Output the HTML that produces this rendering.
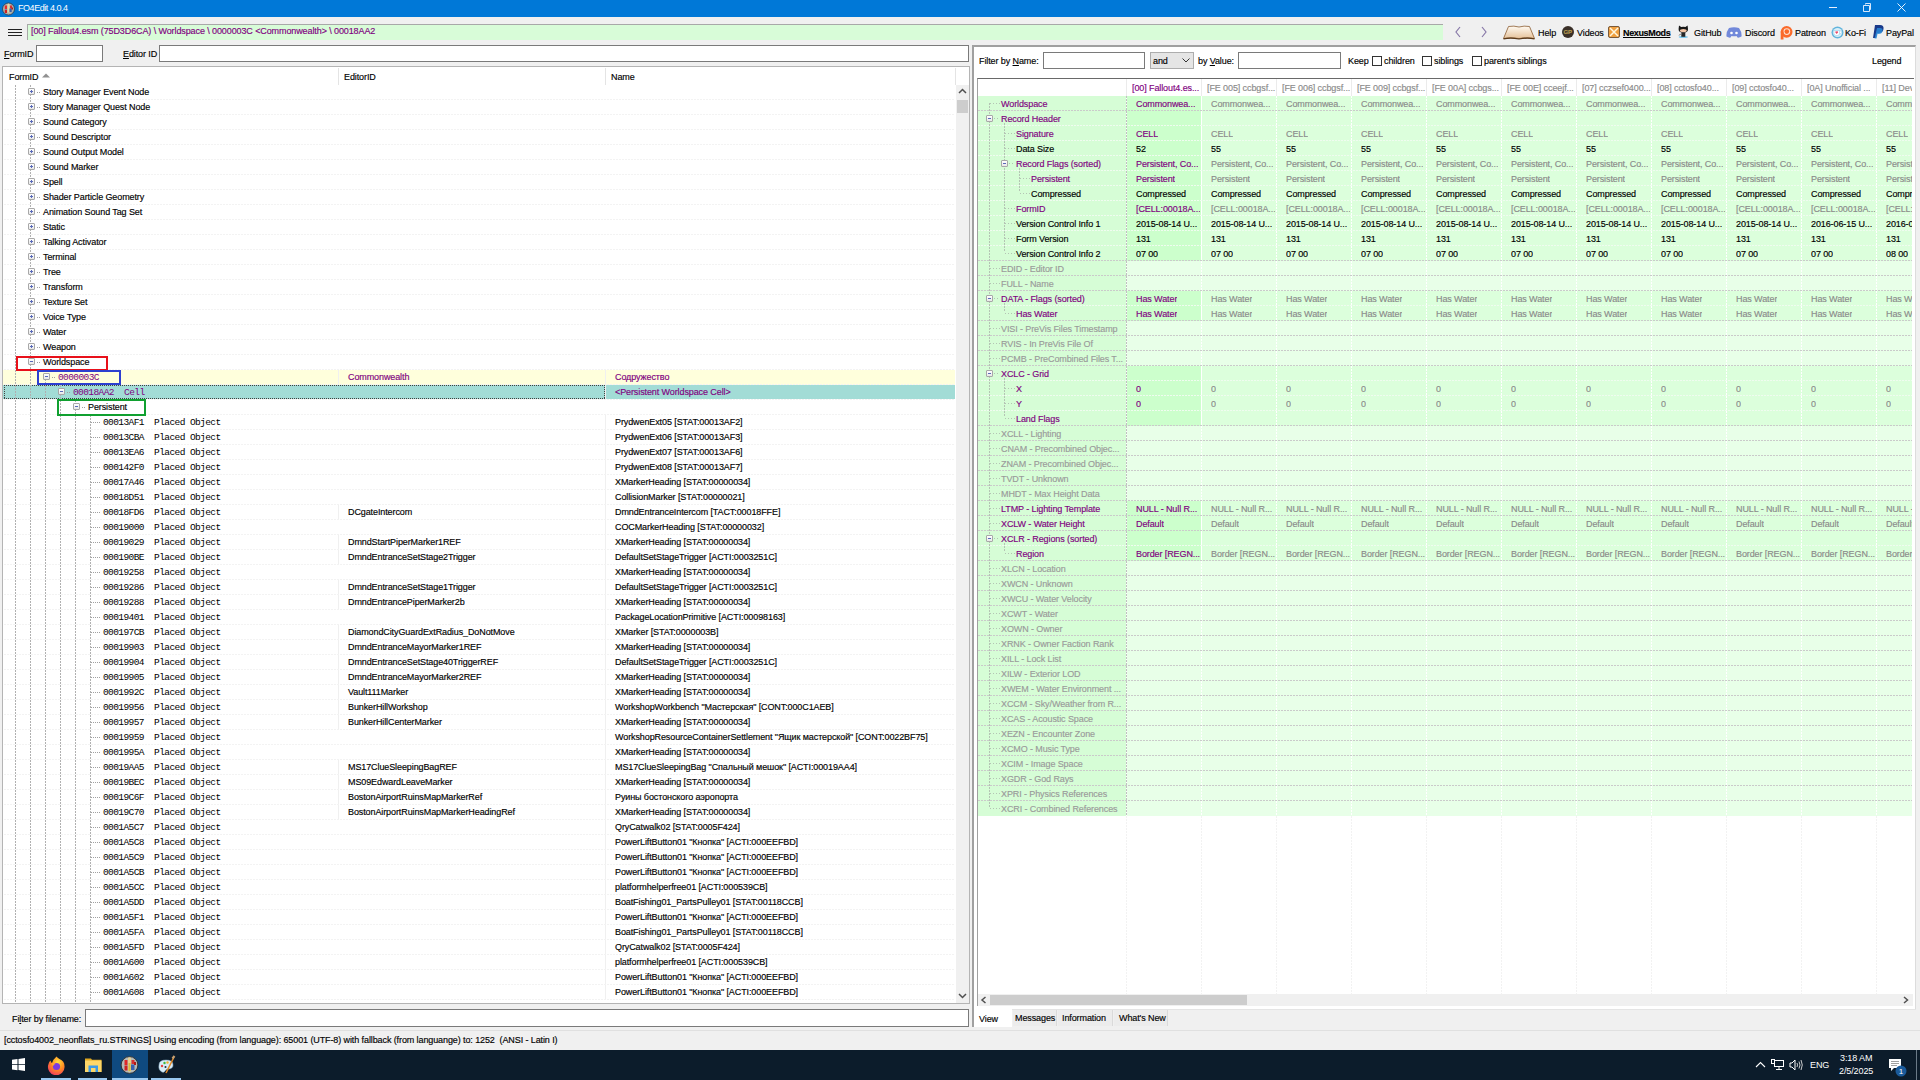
<!DOCTYPE html><html><head><meta charset="utf-8"><style>
*{box-sizing:border-box;margin:0;padding:0}
html,body{width:1920px;height:1080px;overflow:hidden;background:#f0f0f0}
body{position:relative;font-family:"Liberation Sans",sans-serif;font-size:9px;color:#000;letter-spacing:-0.1px}
.a{position:absolute}
.t{position:absolute;white-space:pre;line-height:15px;height:15px;-webkit-text-stroke:0.15px currentColor}
.m{font-family:"Liberation Mono",monospace;font-size:9.5px;letter-spacing:-0.59px;-webkit-text-stroke:0}
.inp{position:absolute;background:#fff;border:1px solid #7a7a7a}
.hd{position:absolute;height:1px;background:repeating-linear-gradient(to right,var(--c) 0 2px,transparent 2px 3px)}
.vd{position:absolute;width:1px;background:repeating-linear-gradient(to bottom,var(--c) 0 2px,transparent 2px 3px)}
.box{position:absolute;width:7px;height:7px;border:1px solid #a8a8a8;border-radius:1px;background:linear-gradient(#fff,#e8e8e8)}
.box::after{content:"";position:absolute;left:1px;top:2px;width:3px;height:1px;background:#5a6ab8}
.plus::before{content:"";position:absolute;left:2px;top:1px;width:1px;height:3px;background:#5a6ab8}
</style></head><body>
<div class="a" style="left:0;top:0;width:1920px;height:17px;background:#0078d7"></div>
<svg class="a" style="left:1px;top:1px" width="14" height="15"><defs><clipPath id="ci"><circle cx="7.5" cy="8" r="5.6"/></clipPath></defs><circle cx="7.5" cy="8" r="6" fill="#a9b0ad" stroke="#2a3a4a" stroke-width="0.8"/><g clip-path="url(#ci)"><rect x="3.8" y="4.5" width="2.2" height="3.5" fill="#e82828"/><rect x="3.8" y="8.5" width="2.2" height="3.5" fill="#d02020"/><rect x="4" y="8" width="2" height="0.6" fill="#6a8ac8"/><rect x="6.5" y="2.5" width="2" height="9" fill="#e8d8a0"/><rect x="9" y="4.5" width="2" height="3" fill="#d83030"/><rect x="8.5" y="7.5" width="2.2" height="3.5" fill="#3a60a8"/><rect x="10.5" y="6.5" width="1.5" height="2" fill="#b01818"/></g></svg>
<div class="t" style="left:18px;top:1px;color:#fff;font-size:9px;line-height:15px;letter-spacing:-0.45px;-webkit-text-stroke:0">FO4Edit 4.0.4</div>
<div class="a" style="left:1829px;top:7px;width:8px;height:1px;background:#e8f0ff"></div>
<svg class="a" style="left:1862px;top:2px" width="10" height="10"><path d="M1.5 3.5H7.5V9.5H1.5Z" stroke="#eef4ff" fill="none" stroke-width="0.9"/><path d="M3.5 2.5V1.5H8.5V7.5H7.5" stroke="#eef4ff" fill="none" stroke-width="0.9"/></svg>
<svg class="a" style="left:1897px;top:3px" width="9" height="9"><path d="M0.5 0.5L8.5 8.5M8.5 0.5L0.5 8.5" stroke="#fff" stroke-width="0.9"/></svg>
<div class="a" style="left:8px;top:29px;width:14px;height:1px;background:#222"></div>
<div class="a" style="left:8px;top:32px;width:14px;height:1px;background:#222"></div>
<div class="a" style="left:8px;top:35px;width:14px;height:1px;background:#222"></div>
<div class="a" style="left:27px;top:24px;width:1416px;height:16px;background:#d8fcd8;border-top:1px solid #a8a8a8;border-left:1px solid #a8a8a8"></div>
<div class="t" style="left:31px;top:24px;color:#800080">[00] Fallout4.esm (75D3D6CA) \ Worldspace \ 0000003C &lt;Commonwealth&gt; \ 00018AA2</div>
<svg class="a" style="left:1454px;top:26px" width="8" height="12"><path d="M6 1L2 6L6 11" stroke="#8878a8" stroke-width="1.2" fill="none"/></svg>
<svg class="a" style="left:1480px;top:26px" width="8" height="12"><path d="M2 1L6 6L2 11" stroke="#8878a8" stroke-width="1.2" fill="none"/></svg>
<svg class="a" style="left:1502px;top:25px" width="34" height="15"><defs><linearGradient id="bk" x1="0" y1="0" x2="0" y2="1"><stop offset="0" stop-color="#fffaf2"/><stop offset="1" stop-color="#e6c29a"/></linearGradient></defs><path d="M1.5 13.5 L6.5 1.5 Q12 0.5 17 2 Q22 0.5 27.5 1.5 L32.5 13.5 Q25 12 17 13.5 Q9 12 1.5 13.5Z" fill="url(#bk)" stroke="#8a5a30" stroke-width="0.8"/><path d="M1.5 13.8 Q9 12.5 17 14 Q25 12.5 32.5 13.8" stroke="#5a3818" stroke-width="1.2" fill="none"/></svg>
<div class="t" style="left:1538px;top:26px;">Help</div>
<div class="a" style="left:1562px;top:26px;width:12px;height:12px;border-radius:50%;background:#3a3028;"></div>
<div class="t" style="left:1563.5px;top:25px;color:#b89a50;font-size:6px;font-weight:bold">GP</div>
<div class="t" style="left:1577px;top:26px;">Videos</div>
<div class="a" style="left:1608px;top:26px;width:12px;height:12px;background:#f0a040;border:1px solid #7a5a3a;border-radius:2px"></div>
<svg class="a" style="left:1608px;top:26px" width="12" height="12"><path d="M2 2L10 10M10 2L2 10" stroke="#fff8e0" stroke-width="1.5"/></svg>
<div class="t" style="left:1623px;top:26px;font-weight:bold;text-decoration:underline;letter-spacing:-0.35px">NexusMods</div>
<svg class="a" style="left:1677px;top:24px" width="13" height="15"><ellipse cx="6.3" cy="13" rx="4.6" ry="1.1" fill="#7cc8ee"/><path d="M2 1.5 L4.2 3 Q6.3 2.3 8.4 3 L10.6 1.5 L11 5 Q11.2 8.8 6.3 8.8 Q1.4 8.8 1.6 5Z" fill="#181818"/><ellipse cx="6.3" cy="6.6" rx="3.4" ry="1.7" fill="#f2c4a4"/><rect x="4.3" y="8.5" width="4" height="4.3" fill="#262626"/><path d="M4.5 10 Q2.5 10 2 11.5" stroke="#9a9a9a" stroke-width="1"/></svg>
<div class="t" style="left:1694px;top:26px;">GitHub</div>
<svg class="a" style="left:1726px;top:27px" width="16" height="11"><path d="M3 1 Q8 -0.5 13 1 Q16 5 15.5 9.5 Q13 11 11.5 10.5 L10.5 9 Q8 9.7 5.5 9 L4.5 10.5 Q3 11 0.5 9.5 Q0 5 3 1Z" fill="#7289da"/><circle cx="5.5" cy="6" r="1.3" fill="#fff"/><circle cx="10.5" cy="6" r="1.3" fill="#fff"/></svg>
<div class="t" style="left:1745px;top:26px;">Discord</div>
<svg class="a" style="left:1779px;top:25px" width="14" height="15"><circle cx="7.6" cy="6.8" r="5.9" fill="#fa6a2a"/><circle cx="7.8" cy="6.6" r="3.4" fill="#fde0d0"/><circle cx="7.8" cy="6.6" r="2.3" fill="#fa6a2a"/><rect x="1.7" y="6.5" width="2.8" height="8" fill="#fa6a2a"/></svg>
<div class="t" style="left:1795px;top:26px;">Patreon</div>
<svg class="a" style="left:1831px;top:26px" width="13" height="13"><circle cx="6.5" cy="6.5" r="6" fill="#62b4dc"/><circle cx="6.5" cy="6.5" r="4.6" fill="#d8eef8"/><path d="M3 4.5 h5.5 v3 a2 2 0 0 1 -2 2 h-1.5 a2 2 0 0 1 -2 -2z M8.5 5 h1 a1.2 1.2 0 0 1 0 2.4 h-1" fill="#fff" stroke="#8ac8e8" stroke-width="0.5"/><path d="M5.7 8 L4.4 6.6 A0.8 0.8 0 0 1 5.7 5.6 A0.8 0.8 0 0 1 7 6.6Z" fill="#e84a6a"/></svg>
<div class="t" style="left:1845px;top:26px;">Ko-Fi</div>
<svg class="a" style="left:1873px;top:25px" width="11" height="14"><path d="M2 0 h5 q4 0 3.5 4 q-0.5 4 -5 4 h-1.5 l-1 5 h-3z" fill="#1a3a8a"/><path d="M4 3 h3 q3 0 2.5 3 q-0.5 3 -4 3 h-1 l-1 4.5 h-2z" fill="#2a8ad8" opacity="0.85"/></svg>
<div class="t" style="left:1886px;top:26px;">PayPal</div>
<div class="t" style="left:4px;top:47px;"><u>F</u>ormID</div>
<div class="inp" style="left:36px;top:45px;width:67px;height:17px"></div>
<div class="t" style="left:123px;top:47px;"><u>E</u>ditor ID</div>
<div class="inp" style="left:159px;top:45px;width:810px;height:17px"></div>
<div class="a" style="left:2px;top:66px;width:968px;height:938px;background:#fff;border:1px solid #b4b4b4"></div>
<div class="t" style="left:9px;top:70px;">FormID</div>
<svg class="a" style="left:42px;top:73px" width="8" height="5"><path d="M0 4.5 L4 0.5 L8 4.5Z" fill="#909090"/></svg>
<div class="a" style="left:338px;top:68px;width:1px;height:17px;background:#e4e4e4"></div>
<div class="t" style="left:344px;top:70px;">EditorID</div>
<div class="a" style="left:605px;top:68px;width:1px;height:17px;background:#e4e4e4"></div>
<div class="t" style="left:611px;top:70px;">Name</div>
<div class="a" style="left:955px;top:68px;width:1px;height:17px;background:#e4e4e4"></div>
<div class="a" style="left:3px;top:370px;width:952px;height:15px;background:#ffffdc"></div>
<div class="a" style="left:3px;top:385px;width:952px;height:14px;background:#a2dcd6"></div>
<div class="a" style="left:4px;top:385px;width:601px;height:1px;background:repeating-linear-gradient(to right,#404040 0 1px,transparent 1px 2px)"></div>
<div class="a" style="left:4px;top:398px;width:601px;height:1px;background:repeating-linear-gradient(to right,#404040 0 1px,transparent 1px 2px)"></div>
<div class="a" style="left:4px;top:385px;width:1px;height:14px;background:repeating-linear-gradient(to bottom,#404040 0 1px,transparent 1px 2px)"></div>
<div class="a" style="left:604px;top:385px;width:1px;height:14px;background:repeating-linear-gradient(to bottom,#404040 0 1px,transparent 1px 2px)"></div>
<div class="a" style="left:605px;top:385px;width:1px;height:14px;background:#fff"></div>
<div class="hd" style="--c:#f3f3f3;left:4px;top:99px;width:951px"></div>
<div class="hd" style="--c:#f3f3f3;left:4px;top:114px;width:951px"></div>
<div class="hd" style="--c:#f3f3f3;left:4px;top:129px;width:951px"></div>
<div class="hd" style="--c:#f3f3f3;left:4px;top:144px;width:951px"></div>
<div class="hd" style="--c:#f3f3f3;left:4px;top:159px;width:951px"></div>
<div class="hd" style="--c:#f3f3f3;left:4px;top:174px;width:951px"></div>
<div class="hd" style="--c:#f3f3f3;left:4px;top:189px;width:951px"></div>
<div class="hd" style="--c:#f3f3f3;left:4px;top:204px;width:951px"></div>
<div class="hd" style="--c:#f3f3f3;left:4px;top:219px;width:951px"></div>
<div class="hd" style="--c:#f3f3f3;left:4px;top:234px;width:951px"></div>
<div class="hd" style="--c:#f3f3f3;left:4px;top:249px;width:951px"></div>
<div class="hd" style="--c:#f3f3f3;left:4px;top:264px;width:951px"></div>
<div class="hd" style="--c:#f3f3f3;left:4px;top:279px;width:951px"></div>
<div class="hd" style="--c:#f3f3f3;left:4px;top:294px;width:951px"></div>
<div class="hd" style="--c:#f3f3f3;left:4px;top:309px;width:951px"></div>
<div class="hd" style="--c:#f3f3f3;left:4px;top:324px;width:951px"></div>
<div class="hd" style="--c:#f3f3f3;left:4px;top:339px;width:951px"></div>
<div class="hd" style="--c:#f3f3f3;left:4px;top:354px;width:951px"></div>
<div class="hd" style="--c:#f3f3f3;left:4px;top:369px;width:951px"></div>
<div class="hd" style="--c:#f3f3f3;left:4px;top:384px;width:951px"></div>
<div class="hd" style="--c:#f3f3f3;left:4px;top:399px;width:951px"></div>
<div class="hd" style="--c:#f3f3f3;left:4px;top:414px;width:951px"></div>
<div class="hd" style="--c:#f3f3f3;left:4px;top:429px;width:951px"></div>
<div class="hd" style="--c:#f3f3f3;left:4px;top:444px;width:951px"></div>
<div class="hd" style="--c:#f3f3f3;left:4px;top:459px;width:951px"></div>
<div class="hd" style="--c:#f3f3f3;left:4px;top:474px;width:951px"></div>
<div class="hd" style="--c:#f3f3f3;left:4px;top:489px;width:951px"></div>
<div class="hd" style="--c:#f3f3f3;left:4px;top:504px;width:951px"></div>
<div class="hd" style="--c:#f3f3f3;left:4px;top:519px;width:951px"></div>
<div class="hd" style="--c:#f3f3f3;left:4px;top:534px;width:951px"></div>
<div class="hd" style="--c:#f3f3f3;left:4px;top:549px;width:951px"></div>
<div class="hd" style="--c:#f3f3f3;left:4px;top:564px;width:951px"></div>
<div class="hd" style="--c:#f3f3f3;left:4px;top:579px;width:951px"></div>
<div class="hd" style="--c:#f3f3f3;left:4px;top:594px;width:951px"></div>
<div class="hd" style="--c:#f3f3f3;left:4px;top:609px;width:951px"></div>
<div class="hd" style="--c:#f3f3f3;left:4px;top:624px;width:951px"></div>
<div class="hd" style="--c:#f3f3f3;left:4px;top:639px;width:951px"></div>
<div class="hd" style="--c:#f3f3f3;left:4px;top:654px;width:951px"></div>
<div class="hd" style="--c:#f3f3f3;left:4px;top:669px;width:951px"></div>
<div class="hd" style="--c:#f3f3f3;left:4px;top:684px;width:951px"></div>
<div class="hd" style="--c:#f3f3f3;left:4px;top:699px;width:951px"></div>
<div class="hd" style="--c:#f3f3f3;left:4px;top:714px;width:951px"></div>
<div class="hd" style="--c:#f3f3f3;left:4px;top:729px;width:951px"></div>
<div class="hd" style="--c:#f3f3f3;left:4px;top:744px;width:951px"></div>
<div class="hd" style="--c:#f3f3f3;left:4px;top:759px;width:951px"></div>
<div class="hd" style="--c:#f3f3f3;left:4px;top:774px;width:951px"></div>
<div class="hd" style="--c:#f3f3f3;left:4px;top:789px;width:951px"></div>
<div class="hd" style="--c:#f3f3f3;left:4px;top:804px;width:951px"></div>
<div class="hd" style="--c:#f3f3f3;left:4px;top:819px;width:951px"></div>
<div class="hd" style="--c:#f3f3f3;left:4px;top:834px;width:951px"></div>
<div class="hd" style="--c:#f3f3f3;left:4px;top:849px;width:951px"></div>
<div class="hd" style="--c:#f3f3f3;left:4px;top:864px;width:951px"></div>
<div class="hd" style="--c:#f3f3f3;left:4px;top:879px;width:951px"></div>
<div class="hd" style="--c:#f3f3f3;left:4px;top:894px;width:951px"></div>
<div class="hd" style="--c:#f3f3f3;left:4px;top:909px;width:951px"></div>
<div class="hd" style="--c:#f3f3f3;left:4px;top:924px;width:951px"></div>
<div class="hd" style="--c:#f3f3f3;left:4px;top:939px;width:951px"></div>
<div class="hd" style="--c:#f3f3f3;left:4px;top:954px;width:951px"></div>
<div class="hd" style="--c:#f3f3f3;left:4px;top:969px;width:951px"></div>
<div class="hd" style="--c:#f3f3f3;left:4px;top:984px;width:951px"></div>
<div class="hd" style="--c:#f3f3f3;left:4px;top:999px;width:951px"></div>
<div class="vd" style="--c:#b0b0b0;left:15px;top:85px;height:918px"></div>
<div class="vd" style="--c:#b0b0b0;left:30px;top:85px;height:918px"></div>
<div class="vd" style="--c:#b0b0b0;left:45px;top:370px;height:633px"></div>
<div class="vd" style="--c:#b0b0b0;left:60px;top:385px;height:618px"></div>
<div class="vd" style="--c:#b0b0b0;left:75px;top:400px;height:603px"></div>
<div class="vd" style="--c:#b0b0b0;left:90px;top:415px;height:588px"></div>
<div class="box plus" style="left:28px;top:88px;"></div>
<div class="hd" style="--c:#a0a0a0;left:37px;top:92px;width:4px;background:repeating-linear-gradient(to right,#a0a0a0 0 1px,transparent 1px 2px)"></div>
<div class="t " style="left:43px;top:85px;color:#000">Story Manager Event Node</div>
<div class="box plus" style="left:28px;top:103px;"></div>
<div class="hd" style="--c:#a0a0a0;left:37px;top:107px;width:4px;background:repeating-linear-gradient(to right,#a0a0a0 0 1px,transparent 1px 2px)"></div>
<div class="t " style="left:43px;top:100px;color:#000">Story Manager Quest Node</div>
<div class="box plus" style="left:28px;top:118px;"></div>
<div class="hd" style="--c:#a0a0a0;left:37px;top:122px;width:4px;background:repeating-linear-gradient(to right,#a0a0a0 0 1px,transparent 1px 2px)"></div>
<div class="t " style="left:43px;top:115px;color:#000">Sound Category</div>
<div class="box plus" style="left:28px;top:133px;"></div>
<div class="hd" style="--c:#a0a0a0;left:37px;top:137px;width:4px;background:repeating-linear-gradient(to right,#a0a0a0 0 1px,transparent 1px 2px)"></div>
<div class="t " style="left:43px;top:130px;color:#000">Sound Descriptor</div>
<div class="box plus" style="left:28px;top:148px;"></div>
<div class="hd" style="--c:#a0a0a0;left:37px;top:152px;width:4px;background:repeating-linear-gradient(to right,#a0a0a0 0 1px,transparent 1px 2px)"></div>
<div class="t " style="left:43px;top:145px;color:#000">Sound Output Model</div>
<div class="box plus" style="left:28px;top:163px;"></div>
<div class="hd" style="--c:#a0a0a0;left:37px;top:167px;width:4px;background:repeating-linear-gradient(to right,#a0a0a0 0 1px,transparent 1px 2px)"></div>
<div class="t " style="left:43px;top:160px;color:#000">Sound Marker</div>
<div class="box plus" style="left:28px;top:178px;"></div>
<div class="hd" style="--c:#a0a0a0;left:37px;top:182px;width:4px;background:repeating-linear-gradient(to right,#a0a0a0 0 1px,transparent 1px 2px)"></div>
<div class="t " style="left:43px;top:175px;color:#000">Spell</div>
<div class="box plus" style="left:28px;top:193px;"></div>
<div class="hd" style="--c:#a0a0a0;left:37px;top:197px;width:4px;background:repeating-linear-gradient(to right,#a0a0a0 0 1px,transparent 1px 2px)"></div>
<div class="t " style="left:43px;top:190px;color:#000">Shader Particle Geometry</div>
<div class="box plus" style="left:28px;top:208px;"></div>
<div class="hd" style="--c:#a0a0a0;left:37px;top:212px;width:4px;background:repeating-linear-gradient(to right,#a0a0a0 0 1px,transparent 1px 2px)"></div>
<div class="t " style="left:43px;top:205px;color:#000">Animation Sound Tag Set</div>
<div class="box plus" style="left:28px;top:223px;"></div>
<div class="hd" style="--c:#a0a0a0;left:37px;top:227px;width:4px;background:repeating-linear-gradient(to right,#a0a0a0 0 1px,transparent 1px 2px)"></div>
<div class="t " style="left:43px;top:220px;color:#000">Static</div>
<div class="box plus" style="left:28px;top:238px;"></div>
<div class="hd" style="--c:#a0a0a0;left:37px;top:242px;width:4px;background:repeating-linear-gradient(to right,#a0a0a0 0 1px,transparent 1px 2px)"></div>
<div class="t " style="left:43px;top:235px;color:#000">Talking Activator</div>
<div class="box plus" style="left:28px;top:253px;"></div>
<div class="hd" style="--c:#a0a0a0;left:37px;top:257px;width:4px;background:repeating-linear-gradient(to right,#a0a0a0 0 1px,transparent 1px 2px)"></div>
<div class="t " style="left:43px;top:250px;color:#000">Terminal</div>
<div class="box plus" style="left:28px;top:268px;"></div>
<div class="hd" style="--c:#a0a0a0;left:37px;top:272px;width:4px;background:repeating-linear-gradient(to right,#a0a0a0 0 1px,transparent 1px 2px)"></div>
<div class="t " style="left:43px;top:265px;color:#000">Tree</div>
<div class="box plus" style="left:28px;top:283px;"></div>
<div class="hd" style="--c:#a0a0a0;left:37px;top:287px;width:4px;background:repeating-linear-gradient(to right,#a0a0a0 0 1px,transparent 1px 2px)"></div>
<div class="t " style="left:43px;top:280px;color:#000">Transform</div>
<div class="box plus" style="left:28px;top:298px;"></div>
<div class="hd" style="--c:#a0a0a0;left:37px;top:302px;width:4px;background:repeating-linear-gradient(to right,#a0a0a0 0 1px,transparent 1px 2px)"></div>
<div class="t " style="left:43px;top:295px;color:#000">Texture Set</div>
<div class="box plus" style="left:28px;top:313px;"></div>
<div class="hd" style="--c:#a0a0a0;left:37px;top:317px;width:4px;background:repeating-linear-gradient(to right,#a0a0a0 0 1px,transparent 1px 2px)"></div>
<div class="t " style="left:43px;top:310px;color:#000">Voice Type</div>
<div class="box plus" style="left:28px;top:328px;"></div>
<div class="hd" style="--c:#a0a0a0;left:37px;top:332px;width:4px;background:repeating-linear-gradient(to right,#a0a0a0 0 1px,transparent 1px 2px)"></div>
<div class="t " style="left:43px;top:325px;color:#000">Water</div>
<div class="box plus" style="left:28px;top:343px;"></div>
<div class="hd" style="--c:#a0a0a0;left:37px;top:347px;width:4px;background:repeating-linear-gradient(to right,#a0a0a0 0 1px,transparent 1px 2px)"></div>
<div class="t " style="left:43px;top:340px;color:#000">Weapon</div>
<div class="box" style="left:28px;top:358px;"></div>
<div class="hd" style="--c:#a0a0a0;left:37px;top:362px;width:4px;background:repeating-linear-gradient(to right,#a0a0a0 0 1px,transparent 1px 2px)"></div>
<div class="t " style="left:43px;top:355px;color:#000">Worldspace</div>
<div class="box" style="left:43px;top:373px;"></div>
<div class="hd" style="--c:#a0a0a0;left:52px;top:377px;width:4px;background:repeating-linear-gradient(to right,#a0a0a0 0 1px,transparent 1px 2px)"></div>
<div class="t m" style="left:58px;top:370px;color:#800080">0000003C</div>
<div class="t" style="left:348px;top:370px;color:#800080">Commonwealth</div>
<div class="a" style="left:338px;top:370px;width:1px;height:14px;background:#f0f0f0"></div>
<div class="t" style="left:615px;top:370px;color:#800080">Содружество</div>
<div class="a" style="left:605px;top:370px;width:1px;height:14px;background:#f0f0f0"></div>
<div class="box" style="left:58px;top:388px;"></div>
<div class="hd" style="--c:#a0a0a0;left:67px;top:392px;width:4px;background:repeating-linear-gradient(to right,#a0a0a0 0 1px,transparent 1px 2px)"></div>
<div class="t m" style="left:73px;top:385px;color:#800080">00018AA2  Cell</div>
<div class="t" style="left:615px;top:385px;color:#800080">&lt;Persistent Worldspace Cell&gt;</div>
<div class="a" style="left:605px;top:385px;width:1px;height:14px;background:#f0f0f0"></div>
<div class="box" style="left:73px;top:403px;"></div>
<div class="hd" style="--c:#a0a0a0;left:82px;top:407px;width:4px;background:repeating-linear-gradient(to right,#a0a0a0 0 1px,transparent 1px 2px)"></div>
<div class="t " style="left:88px;top:400px;color:#000">Persistent</div>
<div class="a" style="left:91px;top:422px;width:9px;height:1px;background:repeating-linear-gradient(to right,#a0a0a0 0 1px,transparent 1px 2px)"></div>
<div class="t m" style="left:103px;top:415px;color:#000">00013AF1  Placed Object</div>
<div class="t" style="left:615px;top:415px;color:#000">PrydwenExt05 [STAT:00013AF2]</div>
<div class="a" style="left:605px;top:415px;width:1px;height:14px;background:#f0f0f0"></div>
<div class="a" style="left:91px;top:437px;width:9px;height:1px;background:repeating-linear-gradient(to right,#a0a0a0 0 1px,transparent 1px 2px)"></div>
<div class="t m" style="left:103px;top:430px;color:#000">00013CBA  Placed Object</div>
<div class="t" style="left:615px;top:430px;color:#000">PrydwenExt06 [STAT:00013AF3]</div>
<div class="a" style="left:605px;top:430px;width:1px;height:14px;background:#f0f0f0"></div>
<div class="a" style="left:91px;top:452px;width:9px;height:1px;background:repeating-linear-gradient(to right,#a0a0a0 0 1px,transparent 1px 2px)"></div>
<div class="t m" style="left:103px;top:445px;color:#000">00013EA6  Placed Object</div>
<div class="t" style="left:615px;top:445px;color:#000">PrydwenExt07 [STAT:00013AF6]</div>
<div class="a" style="left:605px;top:445px;width:1px;height:14px;background:#f0f0f0"></div>
<div class="a" style="left:91px;top:467px;width:9px;height:1px;background:repeating-linear-gradient(to right,#a0a0a0 0 1px,transparent 1px 2px)"></div>
<div class="t m" style="left:103px;top:460px;color:#000">000142F0  Placed Object</div>
<div class="t" style="left:615px;top:460px;color:#000">PrydwenExt08 [STAT:00013AF7]</div>
<div class="a" style="left:605px;top:460px;width:1px;height:14px;background:#f0f0f0"></div>
<div class="a" style="left:91px;top:482px;width:9px;height:1px;background:repeating-linear-gradient(to right,#a0a0a0 0 1px,transparent 1px 2px)"></div>
<div class="t m" style="left:103px;top:475px;color:#000">00017A46  Placed Object</div>
<div class="t" style="left:615px;top:475px;color:#000">XMarkerHeading [STAT:00000034]</div>
<div class="a" style="left:605px;top:475px;width:1px;height:14px;background:#f0f0f0"></div>
<div class="a" style="left:91px;top:497px;width:9px;height:1px;background:repeating-linear-gradient(to right,#a0a0a0 0 1px,transparent 1px 2px)"></div>
<div class="t m" style="left:103px;top:490px;color:#000">00018D51  Placed Object</div>
<div class="t" style="left:615px;top:490px;color:#000">CollisionMarker [STAT:00000021]</div>
<div class="a" style="left:605px;top:490px;width:1px;height:14px;background:#f0f0f0"></div>
<div class="a" style="left:91px;top:512px;width:9px;height:1px;background:repeating-linear-gradient(to right,#a0a0a0 0 1px,transparent 1px 2px)"></div>
<div class="t m" style="left:103px;top:505px;color:#000">00018FD6  Placed Object</div>
<div class="t" style="left:348px;top:505px;color:#000">DCgateIntercom</div>
<div class="a" style="left:338px;top:505px;width:1px;height:14px;background:#f0f0f0"></div>
<div class="t" style="left:615px;top:505px;color:#000">DmndEntranceIntercom [TACT:00018FFE]</div>
<div class="a" style="left:605px;top:505px;width:1px;height:14px;background:#f0f0f0"></div>
<div class="a" style="left:91px;top:527px;width:9px;height:1px;background:repeating-linear-gradient(to right,#a0a0a0 0 1px,transparent 1px 2px)"></div>
<div class="t m" style="left:103px;top:520px;color:#000">00019000  Placed Object</div>
<div class="t" style="left:615px;top:520px;color:#000">COCMarkerHeading [STAT:00000032]</div>
<div class="a" style="left:605px;top:520px;width:1px;height:14px;background:#f0f0f0"></div>
<div class="a" style="left:91px;top:542px;width:9px;height:1px;background:repeating-linear-gradient(to right,#a0a0a0 0 1px,transparent 1px 2px)"></div>
<div class="t m" style="left:103px;top:535px;color:#000">00019029  Placed Object</div>
<div class="t" style="left:348px;top:535px;color:#000">DmndStartPiperMarker1REF</div>
<div class="a" style="left:338px;top:535px;width:1px;height:14px;background:#f0f0f0"></div>
<div class="t" style="left:615px;top:535px;color:#000">XMarkerHeading [STAT:00000034]</div>
<div class="a" style="left:605px;top:535px;width:1px;height:14px;background:#f0f0f0"></div>
<div class="a" style="left:91px;top:557px;width:9px;height:1px;background:repeating-linear-gradient(to right,#a0a0a0 0 1px,transparent 1px 2px)"></div>
<div class="t m" style="left:103px;top:550px;color:#000">000190BE  Placed Object</div>
<div class="t" style="left:348px;top:550px;color:#000">DmndEntranceSetStage2Trigger</div>
<div class="a" style="left:338px;top:550px;width:1px;height:14px;background:#f0f0f0"></div>
<div class="t" style="left:615px;top:550px;color:#000">DefaultSetStageTrigger [ACTI:0003251C]</div>
<div class="a" style="left:605px;top:550px;width:1px;height:14px;background:#f0f0f0"></div>
<div class="a" style="left:91px;top:572px;width:9px;height:1px;background:repeating-linear-gradient(to right,#a0a0a0 0 1px,transparent 1px 2px)"></div>
<div class="t m" style="left:103px;top:565px;color:#000">00019258  Placed Object</div>
<div class="t" style="left:615px;top:565px;color:#000">XMarkerHeading [STAT:00000034]</div>
<div class="a" style="left:605px;top:565px;width:1px;height:14px;background:#f0f0f0"></div>
<div class="a" style="left:91px;top:587px;width:9px;height:1px;background:repeating-linear-gradient(to right,#a0a0a0 0 1px,transparent 1px 2px)"></div>
<div class="t m" style="left:103px;top:580px;color:#000">00019286  Placed Object</div>
<div class="t" style="left:348px;top:580px;color:#000">DmndEntranceSetStage1Trigger</div>
<div class="a" style="left:338px;top:580px;width:1px;height:14px;background:#f0f0f0"></div>
<div class="t" style="left:615px;top:580px;color:#000">DefaultSetStageTrigger [ACTI:0003251C]</div>
<div class="a" style="left:605px;top:580px;width:1px;height:14px;background:#f0f0f0"></div>
<div class="a" style="left:91px;top:602px;width:9px;height:1px;background:repeating-linear-gradient(to right,#a0a0a0 0 1px,transparent 1px 2px)"></div>
<div class="t m" style="left:103px;top:595px;color:#000">00019288  Placed Object</div>
<div class="t" style="left:348px;top:595px;color:#000">DmndEntrancePiperMarker2b</div>
<div class="a" style="left:338px;top:595px;width:1px;height:14px;background:#f0f0f0"></div>
<div class="t" style="left:615px;top:595px;color:#000">XMarkerHeading [STAT:00000034]</div>
<div class="a" style="left:605px;top:595px;width:1px;height:14px;background:#f0f0f0"></div>
<div class="a" style="left:91px;top:617px;width:9px;height:1px;background:repeating-linear-gradient(to right,#a0a0a0 0 1px,transparent 1px 2px)"></div>
<div class="t m" style="left:103px;top:610px;color:#000">00019401  Placed Object</div>
<div class="t" style="left:615px;top:610px;color:#000">PackageLocationPrimitive [ACTI:00098163]</div>
<div class="a" style="left:605px;top:610px;width:1px;height:14px;background:#f0f0f0"></div>
<div class="a" style="left:91px;top:632px;width:9px;height:1px;background:repeating-linear-gradient(to right,#a0a0a0 0 1px,transparent 1px 2px)"></div>
<div class="t m" style="left:103px;top:625px;color:#000">000197CB  Placed Object</div>
<div class="t" style="left:348px;top:625px;color:#000">DiamondCityGuardExtRadius_DoNotMove</div>
<div class="a" style="left:338px;top:625px;width:1px;height:14px;background:#f0f0f0"></div>
<div class="t" style="left:615px;top:625px;color:#000">XMarker [STAT:0000003B]</div>
<div class="a" style="left:605px;top:625px;width:1px;height:14px;background:#f0f0f0"></div>
<div class="a" style="left:91px;top:647px;width:9px;height:1px;background:repeating-linear-gradient(to right,#a0a0a0 0 1px,transparent 1px 2px)"></div>
<div class="t m" style="left:103px;top:640px;color:#000">00019903  Placed Object</div>
<div class="t" style="left:348px;top:640px;color:#000">DmndEntranceMayorMarker1REF</div>
<div class="a" style="left:338px;top:640px;width:1px;height:14px;background:#f0f0f0"></div>
<div class="t" style="left:615px;top:640px;color:#000">XMarkerHeading [STAT:00000034]</div>
<div class="a" style="left:605px;top:640px;width:1px;height:14px;background:#f0f0f0"></div>
<div class="a" style="left:91px;top:662px;width:9px;height:1px;background:repeating-linear-gradient(to right,#a0a0a0 0 1px,transparent 1px 2px)"></div>
<div class="t m" style="left:103px;top:655px;color:#000">00019904  Placed Object</div>
<div class="t" style="left:348px;top:655px;color:#000">DmndEntranceSetStage40TriggerREF</div>
<div class="a" style="left:338px;top:655px;width:1px;height:14px;background:#f0f0f0"></div>
<div class="t" style="left:615px;top:655px;color:#000">DefaultSetStageTrigger [ACTI:0003251C]</div>
<div class="a" style="left:605px;top:655px;width:1px;height:14px;background:#f0f0f0"></div>
<div class="a" style="left:91px;top:677px;width:9px;height:1px;background:repeating-linear-gradient(to right,#a0a0a0 0 1px,transparent 1px 2px)"></div>
<div class="t m" style="left:103px;top:670px;color:#000">00019905  Placed Object</div>
<div class="t" style="left:348px;top:670px;color:#000">DmndEntranceMayorMarker2REF</div>
<div class="a" style="left:338px;top:670px;width:1px;height:14px;background:#f0f0f0"></div>
<div class="t" style="left:615px;top:670px;color:#000">XMarkerHeading [STAT:00000034]</div>
<div class="a" style="left:605px;top:670px;width:1px;height:14px;background:#f0f0f0"></div>
<div class="a" style="left:91px;top:692px;width:9px;height:1px;background:repeating-linear-gradient(to right,#a0a0a0 0 1px,transparent 1px 2px)"></div>
<div class="t m" style="left:103px;top:685px;color:#000">0001992C  Placed Object</div>
<div class="t" style="left:348px;top:685px;color:#000">Vault111Marker</div>
<div class="a" style="left:338px;top:685px;width:1px;height:14px;background:#f0f0f0"></div>
<div class="t" style="left:615px;top:685px;color:#000">XMarkerHeading [STAT:00000034]</div>
<div class="a" style="left:605px;top:685px;width:1px;height:14px;background:#f0f0f0"></div>
<div class="a" style="left:91px;top:707px;width:9px;height:1px;background:repeating-linear-gradient(to right,#a0a0a0 0 1px,transparent 1px 2px)"></div>
<div class="t m" style="left:103px;top:700px;color:#000">00019956  Placed Object</div>
<div class="t" style="left:348px;top:700px;color:#000">BunkerHillWorkshop</div>
<div class="a" style="left:338px;top:700px;width:1px;height:14px;background:#f0f0f0"></div>
<div class="t" style="left:615px;top:700px;color:#000">WorkshopWorkbench "Мастерская" [CONT:000C1AEB]</div>
<div class="a" style="left:605px;top:700px;width:1px;height:14px;background:#f0f0f0"></div>
<div class="a" style="left:91px;top:722px;width:9px;height:1px;background:repeating-linear-gradient(to right,#a0a0a0 0 1px,transparent 1px 2px)"></div>
<div class="t m" style="left:103px;top:715px;color:#000">00019957  Placed Object</div>
<div class="t" style="left:348px;top:715px;color:#000">BunkerHillCenterMarker</div>
<div class="a" style="left:338px;top:715px;width:1px;height:14px;background:#f0f0f0"></div>
<div class="t" style="left:615px;top:715px;color:#000">XMarkerHeading [STAT:00000034]</div>
<div class="a" style="left:605px;top:715px;width:1px;height:14px;background:#f0f0f0"></div>
<div class="a" style="left:91px;top:737px;width:9px;height:1px;background:repeating-linear-gradient(to right,#a0a0a0 0 1px,transparent 1px 2px)"></div>
<div class="t m" style="left:103px;top:730px;color:#000">00019959  Placed Object</div>
<div class="t" style="left:615px;top:730px;color:#000">WorkshopResourceContainerSettlement "Ящик мастерской" [CONT:0022BF75]</div>
<div class="a" style="left:605px;top:730px;width:1px;height:14px;background:#f0f0f0"></div>
<div class="a" style="left:91px;top:752px;width:9px;height:1px;background:repeating-linear-gradient(to right,#a0a0a0 0 1px,transparent 1px 2px)"></div>
<div class="t m" style="left:103px;top:745px;color:#000">0001995A  Placed Object</div>
<div class="t" style="left:615px;top:745px;color:#000">XMarkerHeading [STAT:00000034]</div>
<div class="a" style="left:605px;top:745px;width:1px;height:14px;background:#f0f0f0"></div>
<div class="a" style="left:91px;top:767px;width:9px;height:1px;background:repeating-linear-gradient(to right,#a0a0a0 0 1px,transparent 1px 2px)"></div>
<div class="t m" style="left:103px;top:760px;color:#000">00019AA5  Placed Object</div>
<div class="t" style="left:348px;top:760px;color:#000">MS17ClueSleepingBagREF</div>
<div class="a" style="left:338px;top:760px;width:1px;height:14px;background:#f0f0f0"></div>
<div class="t" style="left:615px;top:760px;color:#000">MS17ClueSleepingBag "Спальный мешок" [ACTI:00019AA4]</div>
<div class="a" style="left:605px;top:760px;width:1px;height:14px;background:#f0f0f0"></div>
<div class="a" style="left:91px;top:782px;width:9px;height:1px;background:repeating-linear-gradient(to right,#a0a0a0 0 1px,transparent 1px 2px)"></div>
<div class="t m" style="left:103px;top:775px;color:#000">00019BEC  Placed Object</div>
<div class="t" style="left:348px;top:775px;color:#000">MS09EdwardLeaveMarker</div>
<div class="a" style="left:338px;top:775px;width:1px;height:14px;background:#f0f0f0"></div>
<div class="t" style="left:615px;top:775px;color:#000">XMarkerHeading [STAT:00000034]</div>
<div class="a" style="left:605px;top:775px;width:1px;height:14px;background:#f0f0f0"></div>
<div class="a" style="left:91px;top:797px;width:9px;height:1px;background:repeating-linear-gradient(to right,#a0a0a0 0 1px,transparent 1px 2px)"></div>
<div class="t m" style="left:103px;top:790px;color:#000">00019C6F  Placed Object</div>
<div class="t" style="left:348px;top:790px;color:#000">BostonAirportRuinsMapMarkerRef</div>
<div class="a" style="left:338px;top:790px;width:1px;height:14px;background:#f0f0f0"></div>
<div class="t" style="left:615px;top:790px;color:#000">Руины бостонского аэропорта</div>
<div class="a" style="left:605px;top:790px;width:1px;height:14px;background:#f0f0f0"></div>
<div class="a" style="left:91px;top:812px;width:9px;height:1px;background:repeating-linear-gradient(to right,#a0a0a0 0 1px,transparent 1px 2px)"></div>
<div class="t m" style="left:103px;top:805px;color:#000">00019C70  Placed Object</div>
<div class="t" style="left:348px;top:805px;color:#000">BostonAirportRuinsMapMarkerHeadingRef</div>
<div class="a" style="left:338px;top:805px;width:1px;height:14px;background:#f0f0f0"></div>
<div class="t" style="left:615px;top:805px;color:#000">XMarkerHeading [STAT:00000034]</div>
<div class="a" style="left:605px;top:805px;width:1px;height:14px;background:#f0f0f0"></div>
<div class="a" style="left:91px;top:827px;width:9px;height:1px;background:repeating-linear-gradient(to right,#a0a0a0 0 1px,transparent 1px 2px)"></div>
<div class="t m" style="left:103px;top:820px;color:#000">0001A5C7  Placed Object</div>
<div class="t" style="left:615px;top:820px;color:#000">QryCatwalk02 [STAT:0005F424]</div>
<div class="a" style="left:605px;top:820px;width:1px;height:14px;background:#f0f0f0"></div>
<div class="a" style="left:91px;top:842px;width:9px;height:1px;background:repeating-linear-gradient(to right,#a0a0a0 0 1px,transparent 1px 2px)"></div>
<div class="t m" style="left:103px;top:835px;color:#000">0001A5C8  Placed Object</div>
<div class="t" style="left:615px;top:835px;color:#000">PowerLiftButton01 "Кнопка" [ACTI:000EEFBD]</div>
<div class="a" style="left:605px;top:835px;width:1px;height:14px;background:#f0f0f0"></div>
<div class="a" style="left:91px;top:857px;width:9px;height:1px;background:repeating-linear-gradient(to right,#a0a0a0 0 1px,transparent 1px 2px)"></div>
<div class="t m" style="left:103px;top:850px;color:#000">0001A5C9  Placed Object</div>
<div class="t" style="left:615px;top:850px;color:#000">PowerLiftButton01 "Кнопка" [ACTI:000EEFBD]</div>
<div class="a" style="left:605px;top:850px;width:1px;height:14px;background:#f0f0f0"></div>
<div class="a" style="left:91px;top:872px;width:9px;height:1px;background:repeating-linear-gradient(to right,#a0a0a0 0 1px,transparent 1px 2px)"></div>
<div class="t m" style="left:103px;top:865px;color:#000">0001A5CB  Placed Object</div>
<div class="t" style="left:615px;top:865px;color:#000">PowerLiftButton01 "Кнопка" [ACTI:000EEFBD]</div>
<div class="a" style="left:605px;top:865px;width:1px;height:14px;background:#f0f0f0"></div>
<div class="a" style="left:91px;top:887px;width:9px;height:1px;background:repeating-linear-gradient(to right,#a0a0a0 0 1px,transparent 1px 2px)"></div>
<div class="t m" style="left:103px;top:880px;color:#000">0001A5CC  Placed Object</div>
<div class="t" style="left:615px;top:880px;color:#000">platformhelperfree01 [ACTI:000539CB]</div>
<div class="a" style="left:605px;top:880px;width:1px;height:14px;background:#f0f0f0"></div>
<div class="a" style="left:91px;top:902px;width:9px;height:1px;background:repeating-linear-gradient(to right,#a0a0a0 0 1px,transparent 1px 2px)"></div>
<div class="t m" style="left:103px;top:895px;color:#000">0001A5DD  Placed Object</div>
<div class="t" style="left:615px;top:895px;color:#000">BoatFishing01_PartsPulley01 [STAT:00118CCB]</div>
<div class="a" style="left:605px;top:895px;width:1px;height:14px;background:#f0f0f0"></div>
<div class="a" style="left:91px;top:917px;width:9px;height:1px;background:repeating-linear-gradient(to right,#a0a0a0 0 1px,transparent 1px 2px)"></div>
<div class="t m" style="left:103px;top:910px;color:#000">0001A5F1  Placed Object</div>
<div class="t" style="left:615px;top:910px;color:#000">PowerLiftButton01 "Кнопка" [ACTI:000EEFBD]</div>
<div class="a" style="left:605px;top:910px;width:1px;height:14px;background:#f0f0f0"></div>
<div class="a" style="left:91px;top:932px;width:9px;height:1px;background:repeating-linear-gradient(to right,#a0a0a0 0 1px,transparent 1px 2px)"></div>
<div class="t m" style="left:103px;top:925px;color:#000">0001A5FA  Placed Object</div>
<div class="t" style="left:615px;top:925px;color:#000">BoatFishing01_PartsPulley01 [STAT:00118CCB]</div>
<div class="a" style="left:605px;top:925px;width:1px;height:14px;background:#f0f0f0"></div>
<div class="a" style="left:91px;top:947px;width:9px;height:1px;background:repeating-linear-gradient(to right,#a0a0a0 0 1px,transparent 1px 2px)"></div>
<div class="t m" style="left:103px;top:940px;color:#000">0001A5FD  Placed Object</div>
<div class="t" style="left:615px;top:940px;color:#000">QryCatwalk02 [STAT:0005F424]</div>
<div class="a" style="left:605px;top:940px;width:1px;height:14px;background:#f0f0f0"></div>
<div class="a" style="left:91px;top:962px;width:9px;height:1px;background:repeating-linear-gradient(to right,#a0a0a0 0 1px,transparent 1px 2px)"></div>
<div class="t m" style="left:103px;top:955px;color:#000">0001A600  Placed Object</div>
<div class="t" style="left:615px;top:955px;color:#000">platformhelperfree01 [ACTI:000539CB]</div>
<div class="a" style="left:605px;top:955px;width:1px;height:14px;background:#f0f0f0"></div>
<div class="a" style="left:91px;top:977px;width:9px;height:1px;background:repeating-linear-gradient(to right,#a0a0a0 0 1px,transparent 1px 2px)"></div>
<div class="t m" style="left:103px;top:970px;color:#000">0001A602  Placed Object</div>
<div class="t" style="left:615px;top:970px;color:#000">PowerLiftButton01 "Кнопка" [ACTI:000EEFBD]</div>
<div class="a" style="left:605px;top:970px;width:1px;height:14px;background:#f0f0f0"></div>
<div class="a" style="left:91px;top:992px;width:9px;height:1px;background:repeating-linear-gradient(to right,#a0a0a0 0 1px,transparent 1px 2px)"></div>
<div class="t m" style="left:103px;top:985px;color:#000">0001A608  Placed Object</div>
<div class="t" style="left:615px;top:985px;color:#000">PowerLiftButton01 "Кнопка" [ACTI:000EEFBD]</div>
<div class="a" style="left:605px;top:985px;width:1px;height:14px;background:#f0f0f0"></div>
<div class="a" style="left:16px;top:356px;width:92px;height:15px;border:2px solid #e8101a"></div>
<div class="a" style="left:37px;top:370px;width:84px;height:15px;border:2px solid #2d3fd0"></div>
<div class="a" style="left:57px;top:399px;width:89px;height:17px;border:2px solid #10a030"></div>
<div class="a" style="left:956px;top:85px;width:13px;height:918px;background:#f0f0f0"></div>
<svg class="a" style="left:958px;top:88px" width="9" height="6"><path d="M1 5L4.5 1.5L8 5" stroke="#505050" stroke-width="1.5" fill="none"/></svg>
<div class="a" style="left:957px;top:100px;width:11px;height:13px;background:#cdcdcd"></div>
<svg class="a" style="left:958px;top:993px" width="9" height="6"><path d="M1 1L4.5 4.5L8 1" stroke="#505050" stroke-width="1.5" fill="none"/></svg>
<div class="t" style="left:12px;top:1012px;">Fi<u>l</u>ter by filename:</div>
<div class="inp" style="left:85px;top:1009px;width:884px;height:18px"></div>
<div class="a" style="left:0;top:1030px;width:1920px;height:1px;background:#e0e0e0"></div>
<div class="t" style="left:4px;top:1033px;">[cctosfo4002_neonflats_ru.STRINGS] Using encoding (from language): 65001 (UTF-8) with fallback (from languange) to: 1252  (ANSI - Latin I)</div>
<div class="a" style="left:972px;top:45px;width:2px;height:982px;background:#a0a0a0"></div>
<div class="a" style="left:974px;top:45px;width:942px;height:982px;background:#fff;border-top:2px solid #a0a0a0;border-right:1px solid #dcdcdc"></div>
<div class="t" style="left:979px;top:54px;">Filter by <u>N</u>ame:</div>
<div class="inp" style="left:1043px;top:52px;width:102px;height:17px"></div>
<div class="a" style="left:1150px;top:52px;width:44px;height:17px;background:#e5e5e5;border:1px solid #adadad"></div>
<div class="t" style="left:1153px;top:54px;">and</div>
<svg class="a" style="left:1182px;top:58px" width="8" height="5"><path d="M0.5 0.5L4 4L7.5 0.5" stroke="#333" fill="none"/></svg>
<div class="t" style="left:1198px;top:54px;">by <u>V</u>alue:</div>
<div class="inp" style="left:1238px;top:52px;width:103px;height:17px"></div>
<div class="t" style="left:1348px;top:54px;">Keep</div>
<div class="a" style="left:1372px;top:56px;width:10px;height:10px;background:#fff;border:1px solid #333"></div>
<div class="t" style="left:1384px;top:54px;">children</div>
<div class="a" style="left:1422px;top:56px;width:10px;height:10px;background:#fff;border:1px solid #333"></div>
<div class="t" style="left:1434px;top:54px;">siblings</div>
<div class="a" style="left:1472px;top:56px;width:10px;height:10px;background:#fff;border:1px solid #333"></div>
<div class="t" style="left:1484px;top:54px;">parent's siblings</div>
<div class="t" style="left:1872px;top:54px;">Legend</div>
<div class="a" style="left:977px;top:78px;width:937px;height:928px;background:#fff;border-top:1px solid #696969;border-left:1px solid #a0a0a0"></div>
<div class="a" style="left:1126px;top:79px;width:1px;height:17px;background:#ebebeb"></div>
<div class="t" style="left:1132px;top:81px;color:#800080;max-width:70px;overflow:hidden">[00] Fallout4.es...</div>
<div class="a" style="left:1201px;top:79px;width:1px;height:17px;background:#ebebeb"></div>
<div class="t" style="left:1207px;top:81px;color:#8a8a8a;max-width:70px;overflow:hidden">[FE 005] ccbgsf...</div>
<div class="a" style="left:1276px;top:79px;width:1px;height:17px;background:#ebebeb"></div>
<div class="t" style="left:1282px;top:81px;color:#8a8a8a;max-width:70px;overflow:hidden">[FE 006] ccbgsf...</div>
<div class="a" style="left:1351px;top:79px;width:1px;height:17px;background:#ebebeb"></div>
<div class="t" style="left:1357px;top:81px;color:#8a8a8a;max-width:70px;overflow:hidden">[FE 009] ccbgsf...</div>
<div class="a" style="left:1426px;top:79px;width:1px;height:17px;background:#ebebeb"></div>
<div class="t" style="left:1432px;top:81px;color:#8a8a8a;max-width:70px;overflow:hidden">[FE 00A] ccbgs...</div>
<div class="a" style="left:1501px;top:79px;width:1px;height:17px;background:#ebebeb"></div>
<div class="t" style="left:1507px;top:81px;color:#8a8a8a;max-width:70px;overflow:hidden">[FE 00E] cceejf...</div>
<div class="a" style="left:1576px;top:79px;width:1px;height:17px;background:#ebebeb"></div>
<div class="t" style="left:1582px;top:81px;color:#8a8a8a;max-width:70px;overflow:hidden">[07] cczsef0400...</div>
<div class="a" style="left:1651px;top:79px;width:1px;height:17px;background:#ebebeb"></div>
<div class="t" style="left:1657px;top:81px;color:#8a8a8a;max-width:70px;overflow:hidden">[08] cctosfo40...</div>
<div class="a" style="left:1726px;top:79px;width:1px;height:17px;background:#ebebeb"></div>
<div class="t" style="left:1732px;top:81px;color:#8a8a8a;max-width:70px;overflow:hidden">[09] cctosfo40...</div>
<div class="a" style="left:1801px;top:79px;width:1px;height:17px;background:#ebebeb"></div>
<div class="t" style="left:1807px;top:81px;color:#8a8a8a;max-width:70px;overflow:hidden">[0A] Unofficial ...</div>
<div class="a" style="left:1876px;top:79px;width:1px;height:17px;background:#ebebeb"></div>
<div class="t" style="left:1882px;top:81px;color:#8a8a8a;max-width:30px;overflow:hidden">[11] Dev</div>
<div class="a" style="left:978px;top:96px;width:148px;height:15px;background:#d6fdd6"></div>
<div class="a" style="left:1127px;top:96px;width:74px;height:15px;background:#ccffcc"></div>
<div class="a" style="left:1202px;top:96px;width:710px;height:15px;background:#dcffdc"></div>
<div class="a" style="left:978px;top:111px;width:148px;height:15px;background:#d6fdd6"></div>
<div class="a" style="left:1127px;top:111px;width:74px;height:15px;background:#ccffcc"></div>
<div class="a" style="left:1202px;top:111px;width:710px;height:15px;background:#dcffdc"></div>
<div class="a" style="left:978px;top:126px;width:148px;height:15px;background:#d6fdd6"></div>
<div class="a" style="left:1127px;top:126px;width:74px;height:15px;background:#ccffcc"></div>
<div class="a" style="left:1202px;top:126px;width:710px;height:15px;background:#dcffdc"></div>
<div class="a" style="left:978px;top:141px;width:148px;height:15px;background:#d6fdd6"></div>
<div class="a" style="left:1127px;top:141px;width:74px;height:15px;background:#ccffcc"></div>
<div class="a" style="left:1202px;top:141px;width:710px;height:15px;background:#dcffdc"></div>
<div class="a" style="left:978px;top:156px;width:148px;height:15px;background:#d6fdd6"></div>
<div class="a" style="left:1127px;top:156px;width:74px;height:15px;background:#ccffcc"></div>
<div class="a" style="left:1202px;top:156px;width:710px;height:15px;background:#dcffdc"></div>
<div class="a" style="left:978px;top:171px;width:148px;height:15px;background:#d6fdd6"></div>
<div class="a" style="left:1127px;top:171px;width:74px;height:15px;background:#ccffcc"></div>
<div class="a" style="left:1202px;top:171px;width:710px;height:15px;background:#dcffdc"></div>
<div class="a" style="left:978px;top:186px;width:148px;height:15px;background:#d6fdd6"></div>
<div class="a" style="left:1127px;top:186px;width:74px;height:15px;background:#ccffcc"></div>
<div class="a" style="left:1202px;top:186px;width:710px;height:15px;background:#dcffdc"></div>
<div class="a" style="left:978px;top:201px;width:148px;height:15px;background:#d6fdd6"></div>
<div class="a" style="left:1127px;top:201px;width:74px;height:15px;background:#ccffcc"></div>
<div class="a" style="left:1202px;top:201px;width:710px;height:15px;background:#dcffdc"></div>
<div class="a" style="left:978px;top:216px;width:148px;height:15px;background:#d6fdd6"></div>
<div class="a" style="left:1127px;top:216px;width:74px;height:15px;background:#ccffcc"></div>
<div class="a" style="left:1202px;top:216px;width:710px;height:15px;background:#dcffdc"></div>
<div class="a" style="left:978px;top:231px;width:148px;height:15px;background:#d6fdd6"></div>
<div class="a" style="left:1127px;top:231px;width:74px;height:15px;background:#ccffcc"></div>
<div class="a" style="left:1202px;top:231px;width:710px;height:15px;background:#dcffdc"></div>
<div class="a" style="left:978px;top:246px;width:148px;height:15px;background:#d6fdd6"></div>
<div class="a" style="left:1127px;top:246px;width:74px;height:15px;background:#ccffcc"></div>
<div class="a" style="left:1202px;top:246px;width:710px;height:15px;background:#dcffdc"></div>
<div class="a" style="left:978px;top:261px;width:148px;height:15px;background:#d6fdd6"></div>
<div class="a" style="left:1127px;top:261px;width:785px;height:15px;background:#e8ffe8"></div>
<div class="a" style="left:978px;top:276px;width:148px;height:15px;background:#d6fdd6"></div>
<div class="a" style="left:1127px;top:276px;width:785px;height:15px;background:#e8ffe8"></div>
<div class="a" style="left:978px;top:291px;width:148px;height:15px;background:#d6fdd6"></div>
<div class="a" style="left:1127px;top:291px;width:74px;height:15px;background:#ccffcc"></div>
<div class="a" style="left:1202px;top:291px;width:710px;height:15px;background:#dcffdc"></div>
<div class="a" style="left:978px;top:306px;width:148px;height:15px;background:#d6fdd6"></div>
<div class="a" style="left:1127px;top:306px;width:74px;height:15px;background:#ccffcc"></div>
<div class="a" style="left:1202px;top:306px;width:710px;height:15px;background:#dcffdc"></div>
<div class="a" style="left:978px;top:321px;width:148px;height:15px;background:#d6fdd6"></div>
<div class="a" style="left:1127px;top:321px;width:785px;height:15px;background:#e8ffe8"></div>
<div class="a" style="left:978px;top:336px;width:148px;height:15px;background:#d6fdd6"></div>
<div class="a" style="left:1127px;top:336px;width:785px;height:15px;background:#e8ffe8"></div>
<div class="a" style="left:978px;top:351px;width:148px;height:15px;background:#d6fdd6"></div>
<div class="a" style="left:1127px;top:351px;width:785px;height:15px;background:#e8ffe8"></div>
<div class="a" style="left:978px;top:366px;width:148px;height:15px;background:#d6fdd6"></div>
<div class="a" style="left:1127px;top:366px;width:74px;height:15px;background:#ccffcc"></div>
<div class="a" style="left:1202px;top:366px;width:710px;height:15px;background:#dcffdc"></div>
<div class="a" style="left:978px;top:381px;width:148px;height:15px;background:#d6fdd6"></div>
<div class="a" style="left:1127px;top:381px;width:74px;height:15px;background:#ccffcc"></div>
<div class="a" style="left:1202px;top:381px;width:710px;height:15px;background:#dcffdc"></div>
<div class="a" style="left:978px;top:396px;width:148px;height:15px;background:#d6fdd6"></div>
<div class="a" style="left:1127px;top:396px;width:74px;height:15px;background:#ccffcc"></div>
<div class="a" style="left:1202px;top:396px;width:710px;height:15px;background:#dcffdc"></div>
<div class="a" style="left:978px;top:411px;width:148px;height:15px;background:#d6fdd6"></div>
<div class="a" style="left:1127px;top:411px;width:74px;height:15px;background:#ccffcc"></div>
<div class="a" style="left:1202px;top:411px;width:710px;height:15px;background:#dcffdc"></div>
<div class="a" style="left:978px;top:426px;width:148px;height:15px;background:#d6fdd6"></div>
<div class="a" style="left:1127px;top:426px;width:785px;height:15px;background:#e8ffe8"></div>
<div class="a" style="left:978px;top:441px;width:148px;height:15px;background:#d6fdd6"></div>
<div class="a" style="left:1127px;top:441px;width:785px;height:15px;background:#e8ffe8"></div>
<div class="a" style="left:978px;top:456px;width:148px;height:15px;background:#d6fdd6"></div>
<div class="a" style="left:1127px;top:456px;width:785px;height:15px;background:#e8ffe8"></div>
<div class="a" style="left:978px;top:471px;width:148px;height:15px;background:#d6fdd6"></div>
<div class="a" style="left:1127px;top:471px;width:785px;height:15px;background:#e8ffe8"></div>
<div class="a" style="left:978px;top:486px;width:148px;height:15px;background:#d6fdd6"></div>
<div class="a" style="left:1127px;top:486px;width:785px;height:15px;background:#e8ffe8"></div>
<div class="a" style="left:978px;top:501px;width:148px;height:15px;background:#d6fdd6"></div>
<div class="a" style="left:1127px;top:501px;width:74px;height:15px;background:#ccffcc"></div>
<div class="a" style="left:1202px;top:501px;width:710px;height:15px;background:#dcffdc"></div>
<div class="a" style="left:978px;top:516px;width:148px;height:15px;background:#d6fdd6"></div>
<div class="a" style="left:1127px;top:516px;width:74px;height:15px;background:#ccffcc"></div>
<div class="a" style="left:1202px;top:516px;width:710px;height:15px;background:#dcffdc"></div>
<div class="a" style="left:978px;top:531px;width:148px;height:15px;background:#d6fdd6"></div>
<div class="a" style="left:1127px;top:531px;width:74px;height:15px;background:#ccffcc"></div>
<div class="a" style="left:1202px;top:531px;width:710px;height:15px;background:#dcffdc"></div>
<div class="a" style="left:978px;top:546px;width:148px;height:15px;background:#d6fdd6"></div>
<div class="a" style="left:1127px;top:546px;width:74px;height:15px;background:#ccffcc"></div>
<div class="a" style="left:1202px;top:546px;width:710px;height:15px;background:#dcffdc"></div>
<div class="a" style="left:978px;top:561px;width:148px;height:15px;background:#d6fdd6"></div>
<div class="a" style="left:1127px;top:561px;width:785px;height:15px;background:#e8ffe8"></div>
<div class="a" style="left:978px;top:576px;width:148px;height:15px;background:#d6fdd6"></div>
<div class="a" style="left:1127px;top:576px;width:785px;height:15px;background:#e8ffe8"></div>
<div class="a" style="left:978px;top:591px;width:148px;height:15px;background:#d6fdd6"></div>
<div class="a" style="left:1127px;top:591px;width:785px;height:15px;background:#e8ffe8"></div>
<div class="a" style="left:978px;top:606px;width:148px;height:15px;background:#d6fdd6"></div>
<div class="a" style="left:1127px;top:606px;width:785px;height:15px;background:#e8ffe8"></div>
<div class="a" style="left:978px;top:621px;width:148px;height:15px;background:#d6fdd6"></div>
<div class="a" style="left:1127px;top:621px;width:785px;height:15px;background:#e8ffe8"></div>
<div class="a" style="left:978px;top:636px;width:148px;height:15px;background:#d6fdd6"></div>
<div class="a" style="left:1127px;top:636px;width:785px;height:15px;background:#e8ffe8"></div>
<div class="a" style="left:978px;top:651px;width:148px;height:15px;background:#d6fdd6"></div>
<div class="a" style="left:1127px;top:651px;width:785px;height:15px;background:#e8ffe8"></div>
<div class="a" style="left:978px;top:666px;width:148px;height:15px;background:#d6fdd6"></div>
<div class="a" style="left:1127px;top:666px;width:785px;height:15px;background:#e8ffe8"></div>
<div class="a" style="left:978px;top:681px;width:148px;height:15px;background:#d6fdd6"></div>
<div class="a" style="left:1127px;top:681px;width:785px;height:15px;background:#e8ffe8"></div>
<div class="a" style="left:978px;top:696px;width:148px;height:15px;background:#d6fdd6"></div>
<div class="a" style="left:1127px;top:696px;width:785px;height:15px;background:#e8ffe8"></div>
<div class="a" style="left:978px;top:711px;width:148px;height:15px;background:#d6fdd6"></div>
<div class="a" style="left:1127px;top:711px;width:785px;height:15px;background:#e8ffe8"></div>
<div class="a" style="left:978px;top:726px;width:148px;height:15px;background:#d6fdd6"></div>
<div class="a" style="left:1127px;top:726px;width:785px;height:15px;background:#e8ffe8"></div>
<div class="a" style="left:978px;top:741px;width:148px;height:15px;background:#d6fdd6"></div>
<div class="a" style="left:1127px;top:741px;width:785px;height:15px;background:#e8ffe8"></div>
<div class="a" style="left:978px;top:756px;width:148px;height:15px;background:#d6fdd6"></div>
<div class="a" style="left:1127px;top:756px;width:785px;height:15px;background:#e8ffe8"></div>
<div class="a" style="left:978px;top:771px;width:148px;height:15px;background:#d6fdd6"></div>
<div class="a" style="left:1127px;top:771px;width:785px;height:15px;background:#e8ffe8"></div>
<div class="a" style="left:978px;top:786px;width:148px;height:15px;background:#d6fdd6"></div>
<div class="a" style="left:1127px;top:786px;width:785px;height:15px;background:#e8ffe8"></div>
<div class="a" style="left:978px;top:801px;width:148px;height:15px;background:#d6fdd6"></div>
<div class="a" style="left:1127px;top:801px;width:785px;height:15px;background:#e8ffe8"></div>
<div class="hd" style="--c:#cacaca;left:978px;top:110px;width:934px"></div>
<div class="hd" style="--c:#f0fcf0;left:978px;top:125px;width:934px"></div>
<div class="hd" style="--c:#f0fcf0;left:978px;top:140px;width:934px"></div>
<div class="hd" style="--c:#f0fcf0;left:978px;top:155px;width:934px"></div>
<div class="hd" style="--c:#f0fcf0;left:978px;top:170px;width:934px"></div>
<div class="hd" style="--c:#f0fcf0;left:978px;top:185px;width:934px"></div>
<div class="hd" style="--c:#f0fcf0;left:978px;top:200px;width:934px"></div>
<div class="hd" style="--c:#f0fcf0;left:978px;top:215px;width:934px"></div>
<div class="hd" style="--c:#f0fcf0;left:978px;top:230px;width:934px"></div>
<div class="hd" style="--c:#f0fcf0;left:978px;top:245px;width:934px"></div>
<div class="hd" style="--c:#cacaca;left:978px;top:260px;width:934px"></div>
<div class="hd" style="--c:#cacaca;left:978px;top:275px;width:934px"></div>
<div class="hd" style="--c:#cacaca;left:978px;top:290px;width:934px"></div>
<div class="hd" style="--c:#f0fcf0;left:978px;top:305px;width:934px"></div>
<div class="hd" style="--c:#cacaca;left:978px;top:320px;width:934px"></div>
<div class="hd" style="--c:#cacaca;left:978px;top:335px;width:934px"></div>
<div class="hd" style="--c:#cacaca;left:978px;top:350px;width:934px"></div>
<div class="hd" style="--c:#cacaca;left:978px;top:365px;width:934px"></div>
<div class="hd" style="--c:#f0fcf0;left:978px;top:380px;width:934px"></div>
<div class="hd" style="--c:#f0fcf0;left:978px;top:395px;width:934px"></div>
<div class="hd" style="--c:#f0fcf0;left:978px;top:410px;width:934px"></div>
<div class="hd" style="--c:#cacaca;left:978px;top:425px;width:934px"></div>
<div class="hd" style="--c:#cacaca;left:978px;top:440px;width:934px"></div>
<div class="hd" style="--c:#cacaca;left:978px;top:455px;width:934px"></div>
<div class="hd" style="--c:#cacaca;left:978px;top:470px;width:934px"></div>
<div class="hd" style="--c:#cacaca;left:978px;top:485px;width:934px"></div>
<div class="hd" style="--c:#cacaca;left:978px;top:500px;width:934px"></div>
<div class="hd" style="--c:#cacaca;left:978px;top:515px;width:934px"></div>
<div class="hd" style="--c:#cacaca;left:978px;top:530px;width:934px"></div>
<div class="hd" style="--c:#f0fcf0;left:978px;top:545px;width:934px"></div>
<div class="hd" style="--c:#cacaca;left:978px;top:560px;width:934px"></div>
<div class="hd" style="--c:#cacaca;left:978px;top:575px;width:934px"></div>
<div class="hd" style="--c:#cacaca;left:978px;top:590px;width:934px"></div>
<div class="hd" style="--c:#cacaca;left:978px;top:605px;width:934px"></div>
<div class="hd" style="--c:#cacaca;left:978px;top:620px;width:934px"></div>
<div class="hd" style="--c:#cacaca;left:978px;top:635px;width:934px"></div>
<div class="hd" style="--c:#cacaca;left:978px;top:650px;width:934px"></div>
<div class="hd" style="--c:#cacaca;left:978px;top:665px;width:934px"></div>
<div class="hd" style="--c:#cacaca;left:978px;top:680px;width:934px"></div>
<div class="hd" style="--c:#cacaca;left:978px;top:695px;width:934px"></div>
<div class="hd" style="--c:#cacaca;left:978px;top:710px;width:934px"></div>
<div class="hd" style="--c:#cacaca;left:978px;top:725px;width:934px"></div>
<div class="hd" style="--c:#cacaca;left:978px;top:740px;width:934px"></div>
<div class="hd" style="--c:#cacaca;left:978px;top:755px;width:934px"></div>
<div class="hd" style="--c:#cacaca;left:978px;top:770px;width:934px"></div>
<div class="hd" style="--c:#cacaca;left:978px;top:785px;width:934px"></div>
<div class="hd" style="--c:#cacaca;left:978px;top:800px;width:934px"></div>
<div class="vd" style="--c:#c0c0c0;left:1126px;top:96px;height:720px"></div>
<div class="vd" style="--c:#f2f2f2;left:1126px;top:816px;height:178px"></div>
<div class="vd" style="--c:#ffffff;left:1201px;top:96px;height:720px"></div>
<div class="vd" style="--c:#f2f2f2;left:1201px;top:816px;height:178px"></div>
<div class="vd" style="--c:#ffffff;left:1276px;top:96px;height:720px"></div>
<div class="vd" style="--c:#f2f2f2;left:1276px;top:816px;height:178px"></div>
<div class="vd" style="--c:#ffffff;left:1351px;top:96px;height:720px"></div>
<div class="vd" style="--c:#f2f2f2;left:1351px;top:816px;height:178px"></div>
<div class="vd" style="--c:#ffffff;left:1426px;top:96px;height:720px"></div>
<div class="vd" style="--c:#f2f2f2;left:1426px;top:816px;height:178px"></div>
<div class="vd" style="--c:#ffffff;left:1501px;top:96px;height:720px"></div>
<div class="vd" style="--c:#f2f2f2;left:1501px;top:816px;height:178px"></div>
<div class="vd" style="--c:#ffffff;left:1576px;top:96px;height:720px"></div>
<div class="vd" style="--c:#f2f2f2;left:1576px;top:816px;height:178px"></div>
<div class="vd" style="--c:#ffffff;left:1651px;top:96px;height:720px"></div>
<div class="vd" style="--c:#f2f2f2;left:1651px;top:816px;height:178px"></div>
<div class="vd" style="--c:#ffffff;left:1726px;top:96px;height:720px"></div>
<div class="vd" style="--c:#f2f2f2;left:1726px;top:816px;height:178px"></div>
<div class="vd" style="--c:#ffffff;left:1801px;top:96px;height:720px"></div>
<div class="vd" style="--c:#f2f2f2;left:1801px;top:816px;height:178px"></div>
<div class="vd" style="--c:#ffffff;left:1876px;top:96px;height:720px"></div>
<div class="vd" style="--c:#f2f2f2;left:1876px;top:816px;height:178px"></div>
<div class="vd" style="--c:#b4c4b4;left:989px;top:103px;height:705px"></div>
<div class="vd" style="--c:#b4c4b4;left:1004px;top:123px;height:128px"></div>
<div class="vd" style="--c:#b4c4b4;left:1004px;top:303px;height:8px"></div>
<div class="vd" style="--c:#b4c4b4;left:1004px;top:378px;height:38px"></div>
<div class="vd" style="--c:#b4c4b4;left:1004px;top:543px;height:8px"></div>
<div class="vd" style="--c:#b4c4b4;left:1019px;top:168px;height:23px"></div>
<div class="a" style="left:990px;top:103px;width:10px;height:1px;background:repeating-linear-gradient(to right,#b4c4b4 0 1px,transparent 1px 3px)"></div>
<div class="t" style="left:1001px;top:96.5px;color:#800080">Worldspace</div>
<div class="t" style="left:1136px;top:96.5px;color:#800080;max-width:64px;overflow:hidden">Commonwea...</div>
<div class="t" style="left:1211px;top:96.5px;color:#8a8a8a;max-width:64px;overflow:hidden">Commonwea...</div>
<div class="t" style="left:1286px;top:96.5px;color:#8a8a8a;max-width:64px;overflow:hidden">Commonwea...</div>
<div class="t" style="left:1361px;top:96.5px;color:#8a8a8a;max-width:64px;overflow:hidden">Commonwea...</div>
<div class="t" style="left:1436px;top:96.5px;color:#8a8a8a;max-width:64px;overflow:hidden">Commonwea...</div>
<div class="t" style="left:1511px;top:96.5px;color:#8a8a8a;max-width:64px;overflow:hidden">Commonwea...</div>
<div class="t" style="left:1586px;top:96.5px;color:#8a8a8a;max-width:64px;overflow:hidden">Commonwea...</div>
<div class="t" style="left:1661px;top:96.5px;color:#8a8a8a;max-width:64px;overflow:hidden">Commonwea...</div>
<div class="t" style="left:1736px;top:96.5px;color:#8a8a8a;max-width:64px;overflow:hidden">Commonwea...</div>
<div class="t" style="left:1811px;top:96.5px;color:#8a8a8a;max-width:64px;overflow:hidden">Commonwea...</div>
<div class="t" style="left:1886px;top:96.5px;color:#8a8a8a;max-width:26px;overflow:hidden">Commonwea...</div>
<div class="box" style="left:986px;top:115px;"></div>
<div class="a" style="left:994px;top:118px;width:6px;height:1px;background:repeating-linear-gradient(to right,#b4c4b4 0 1px,transparent 1px 3px)"></div>
<div class="t" style="left:1001px;top:111.5px;color:#800080">Record Header</div>
<div class="a" style="left:1005px;top:133px;width:10px;height:1px;background:repeating-linear-gradient(to right,#b4c4b4 0 1px,transparent 1px 3px)"></div>
<div class="t" style="left:1016px;top:126.5px;color:#800080">Signature</div>
<div class="t" style="left:1136px;top:126.5px;color:#800080;max-width:64px;overflow:hidden">CELL</div>
<div class="t" style="left:1211px;top:126.5px;color:#8a8a8a;max-width:64px;overflow:hidden">CELL</div>
<div class="t" style="left:1286px;top:126.5px;color:#8a8a8a;max-width:64px;overflow:hidden">CELL</div>
<div class="t" style="left:1361px;top:126.5px;color:#8a8a8a;max-width:64px;overflow:hidden">CELL</div>
<div class="t" style="left:1436px;top:126.5px;color:#8a8a8a;max-width:64px;overflow:hidden">CELL</div>
<div class="t" style="left:1511px;top:126.5px;color:#8a8a8a;max-width:64px;overflow:hidden">CELL</div>
<div class="t" style="left:1586px;top:126.5px;color:#8a8a8a;max-width:64px;overflow:hidden">CELL</div>
<div class="t" style="left:1661px;top:126.5px;color:#8a8a8a;max-width:64px;overflow:hidden">CELL</div>
<div class="t" style="left:1736px;top:126.5px;color:#8a8a8a;max-width:64px;overflow:hidden">CELL</div>
<div class="t" style="left:1811px;top:126.5px;color:#8a8a8a;max-width:64px;overflow:hidden">CELL</div>
<div class="t" style="left:1886px;top:126.5px;color:#8a8a8a;max-width:26px;overflow:hidden">CELL</div>
<div class="a" style="left:1005px;top:148px;width:10px;height:1px;background:repeating-linear-gradient(to right,#b4c4b4 0 1px,transparent 1px 3px)"></div>
<div class="t" style="left:1016px;top:141.5px;color:#000">Data Size</div>
<div class="t" style="left:1136px;top:141.5px;color:#000;max-width:64px;overflow:hidden">52</div>
<div class="t" style="left:1211px;top:141.5px;color:#000;max-width:64px;overflow:hidden">55</div>
<div class="t" style="left:1286px;top:141.5px;color:#000;max-width:64px;overflow:hidden">55</div>
<div class="t" style="left:1361px;top:141.5px;color:#000;max-width:64px;overflow:hidden">55</div>
<div class="t" style="left:1436px;top:141.5px;color:#000;max-width:64px;overflow:hidden">55</div>
<div class="t" style="left:1511px;top:141.5px;color:#000;max-width:64px;overflow:hidden">55</div>
<div class="t" style="left:1586px;top:141.5px;color:#000;max-width:64px;overflow:hidden">55</div>
<div class="t" style="left:1661px;top:141.5px;color:#000;max-width:64px;overflow:hidden">55</div>
<div class="t" style="left:1736px;top:141.5px;color:#000;max-width:64px;overflow:hidden">55</div>
<div class="t" style="left:1811px;top:141.5px;color:#000;max-width:64px;overflow:hidden">55</div>
<div class="t" style="left:1886px;top:141.5px;color:#000;max-width:26px;overflow:hidden">55</div>
<div class="box" style="left:1001px;top:160px;"></div>
<div class="a" style="left:1009px;top:163px;width:6px;height:1px;background:repeating-linear-gradient(to right,#b4c4b4 0 1px,transparent 1px 3px)"></div>
<div class="t" style="left:1016px;top:156.5px;color:#800080">Record Flags (sorted)</div>
<div class="t" style="left:1136px;top:156.5px;color:#800080;max-width:64px;overflow:hidden">Persistent, Co...</div>
<div class="t" style="left:1211px;top:156.5px;color:#8a8a8a;max-width:64px;overflow:hidden">Persistent, Co...</div>
<div class="t" style="left:1286px;top:156.5px;color:#8a8a8a;max-width:64px;overflow:hidden">Persistent, Co...</div>
<div class="t" style="left:1361px;top:156.5px;color:#8a8a8a;max-width:64px;overflow:hidden">Persistent, Co...</div>
<div class="t" style="left:1436px;top:156.5px;color:#8a8a8a;max-width:64px;overflow:hidden">Persistent, Co...</div>
<div class="t" style="left:1511px;top:156.5px;color:#8a8a8a;max-width:64px;overflow:hidden">Persistent, Co...</div>
<div class="t" style="left:1586px;top:156.5px;color:#8a8a8a;max-width:64px;overflow:hidden">Persistent, Co...</div>
<div class="t" style="left:1661px;top:156.5px;color:#8a8a8a;max-width:64px;overflow:hidden">Persistent, Co...</div>
<div class="t" style="left:1736px;top:156.5px;color:#8a8a8a;max-width:64px;overflow:hidden">Persistent, Co...</div>
<div class="t" style="left:1811px;top:156.5px;color:#8a8a8a;max-width:64px;overflow:hidden">Persistent, Co...</div>
<div class="t" style="left:1886px;top:156.5px;color:#8a8a8a;max-width:26px;overflow:hidden">Persistent, Co...</div>
<div class="a" style="left:1020px;top:178px;width:10px;height:1px;background:repeating-linear-gradient(to right,#b4c4b4 0 1px,transparent 1px 3px)"></div>
<div class="t" style="left:1031px;top:171.5px;color:#800080">Persistent</div>
<div class="t" style="left:1136px;top:171.5px;color:#800080;max-width:64px;overflow:hidden">Persistent</div>
<div class="t" style="left:1211px;top:171.5px;color:#8a8a8a;max-width:64px;overflow:hidden">Persistent</div>
<div class="t" style="left:1286px;top:171.5px;color:#8a8a8a;max-width:64px;overflow:hidden">Persistent</div>
<div class="t" style="left:1361px;top:171.5px;color:#8a8a8a;max-width:64px;overflow:hidden">Persistent</div>
<div class="t" style="left:1436px;top:171.5px;color:#8a8a8a;max-width:64px;overflow:hidden">Persistent</div>
<div class="t" style="left:1511px;top:171.5px;color:#8a8a8a;max-width:64px;overflow:hidden">Persistent</div>
<div class="t" style="left:1586px;top:171.5px;color:#8a8a8a;max-width:64px;overflow:hidden">Persistent</div>
<div class="t" style="left:1661px;top:171.5px;color:#8a8a8a;max-width:64px;overflow:hidden">Persistent</div>
<div class="t" style="left:1736px;top:171.5px;color:#8a8a8a;max-width:64px;overflow:hidden">Persistent</div>
<div class="t" style="left:1811px;top:171.5px;color:#8a8a8a;max-width:64px;overflow:hidden">Persistent</div>
<div class="t" style="left:1886px;top:171.5px;color:#8a8a8a;max-width:26px;overflow:hidden">Persistent</div>
<div class="a" style="left:1020px;top:193px;width:10px;height:1px;background:repeating-linear-gradient(to right,#b4c4b4 0 1px,transparent 1px 3px)"></div>
<div class="t" style="left:1031px;top:186.5px;color:#000">Compressed</div>
<div class="t" style="left:1136px;top:186.5px;color:#000;max-width:64px;overflow:hidden">Compressed</div>
<div class="t" style="left:1211px;top:186.5px;color:#000;max-width:64px;overflow:hidden">Compressed</div>
<div class="t" style="left:1286px;top:186.5px;color:#000;max-width:64px;overflow:hidden">Compressed</div>
<div class="t" style="left:1361px;top:186.5px;color:#000;max-width:64px;overflow:hidden">Compressed</div>
<div class="t" style="left:1436px;top:186.5px;color:#000;max-width:64px;overflow:hidden">Compressed</div>
<div class="t" style="left:1511px;top:186.5px;color:#000;max-width:64px;overflow:hidden">Compressed</div>
<div class="t" style="left:1586px;top:186.5px;color:#000;max-width:64px;overflow:hidden">Compressed</div>
<div class="t" style="left:1661px;top:186.5px;color:#000;max-width:64px;overflow:hidden">Compressed</div>
<div class="t" style="left:1736px;top:186.5px;color:#000;max-width:64px;overflow:hidden">Compressed</div>
<div class="t" style="left:1811px;top:186.5px;color:#000;max-width:64px;overflow:hidden">Compressed</div>
<div class="t" style="left:1886px;top:186.5px;color:#000;max-width:26px;overflow:hidden">Compressed</div>
<div class="a" style="left:1005px;top:208px;width:10px;height:1px;background:repeating-linear-gradient(to right,#b4c4b4 0 1px,transparent 1px 3px)"></div>
<div class="t" style="left:1016px;top:201.5px;color:#800080">FormID</div>
<div class="t" style="left:1136px;top:201.5px;color:#800080;max-width:64px;overflow:hidden">[CELL:00018A...</div>
<div class="t" style="left:1211px;top:201.5px;color:#8a8a8a;max-width:64px;overflow:hidden">[CELL:00018A...</div>
<div class="t" style="left:1286px;top:201.5px;color:#8a8a8a;max-width:64px;overflow:hidden">[CELL:00018A...</div>
<div class="t" style="left:1361px;top:201.5px;color:#8a8a8a;max-width:64px;overflow:hidden">[CELL:00018A...</div>
<div class="t" style="left:1436px;top:201.5px;color:#8a8a8a;max-width:64px;overflow:hidden">[CELL:00018A...</div>
<div class="t" style="left:1511px;top:201.5px;color:#8a8a8a;max-width:64px;overflow:hidden">[CELL:00018A...</div>
<div class="t" style="left:1586px;top:201.5px;color:#8a8a8a;max-width:64px;overflow:hidden">[CELL:00018A...</div>
<div class="t" style="left:1661px;top:201.5px;color:#8a8a8a;max-width:64px;overflow:hidden">[CELL:00018A...</div>
<div class="t" style="left:1736px;top:201.5px;color:#8a8a8a;max-width:64px;overflow:hidden">[CELL:00018A...</div>
<div class="t" style="left:1811px;top:201.5px;color:#8a8a8a;max-width:64px;overflow:hidden">[CELL:00018A...</div>
<div class="t" style="left:1886px;top:201.5px;color:#8a8a8a;max-width:26px;overflow:hidden">[CELL:00018A...</div>
<div class="a" style="left:1005px;top:223px;width:10px;height:1px;background:repeating-linear-gradient(to right,#b4c4b4 0 1px,transparent 1px 3px)"></div>
<div class="t" style="left:1016px;top:216.5px;color:#000">Version Control Info 1</div>
<div class="t" style="left:1136px;top:216.5px;color:#000;max-width:64px;overflow:hidden">2015-08-14 U...</div>
<div class="t" style="left:1211px;top:216.5px;color:#000;max-width:64px;overflow:hidden">2015-08-14 U...</div>
<div class="t" style="left:1286px;top:216.5px;color:#000;max-width:64px;overflow:hidden">2015-08-14 U...</div>
<div class="t" style="left:1361px;top:216.5px;color:#000;max-width:64px;overflow:hidden">2015-08-14 U...</div>
<div class="t" style="left:1436px;top:216.5px;color:#000;max-width:64px;overflow:hidden">2015-08-14 U...</div>
<div class="t" style="left:1511px;top:216.5px;color:#000;max-width:64px;overflow:hidden">2015-08-14 U...</div>
<div class="t" style="left:1586px;top:216.5px;color:#000;max-width:64px;overflow:hidden">2015-08-14 U...</div>
<div class="t" style="left:1661px;top:216.5px;color:#000;max-width:64px;overflow:hidden">2015-08-14 U...</div>
<div class="t" style="left:1736px;top:216.5px;color:#000;max-width:64px;overflow:hidden">2015-08-14 U...</div>
<div class="t" style="left:1811px;top:216.5px;color:#000;max-width:64px;overflow:hidden">2016-06-15 U...</div>
<div class="t" style="left:1886px;top:216.5px;color:#000;max-width:26px;overflow:hidden">2016-0</div>
<div class="a" style="left:1005px;top:238px;width:10px;height:1px;background:repeating-linear-gradient(to right,#b4c4b4 0 1px,transparent 1px 3px)"></div>
<div class="t" style="left:1016px;top:231.5px;color:#000">Form Version</div>
<div class="t" style="left:1136px;top:231.5px;color:#000;max-width:64px;overflow:hidden">131</div>
<div class="t" style="left:1211px;top:231.5px;color:#000;max-width:64px;overflow:hidden">131</div>
<div class="t" style="left:1286px;top:231.5px;color:#000;max-width:64px;overflow:hidden">131</div>
<div class="t" style="left:1361px;top:231.5px;color:#000;max-width:64px;overflow:hidden">131</div>
<div class="t" style="left:1436px;top:231.5px;color:#000;max-width:64px;overflow:hidden">131</div>
<div class="t" style="left:1511px;top:231.5px;color:#000;max-width:64px;overflow:hidden">131</div>
<div class="t" style="left:1586px;top:231.5px;color:#000;max-width:64px;overflow:hidden">131</div>
<div class="t" style="left:1661px;top:231.5px;color:#000;max-width:64px;overflow:hidden">131</div>
<div class="t" style="left:1736px;top:231.5px;color:#000;max-width:64px;overflow:hidden">131</div>
<div class="t" style="left:1811px;top:231.5px;color:#000;max-width:64px;overflow:hidden">131</div>
<div class="t" style="left:1886px;top:231.5px;color:#000;max-width:26px;overflow:hidden">131</div>
<div class="a" style="left:1005px;top:253px;width:10px;height:1px;background:repeating-linear-gradient(to right,#b4c4b4 0 1px,transparent 1px 3px)"></div>
<div class="t" style="left:1016px;top:246.5px;color:#000">Version Control Info 2</div>
<div class="t" style="left:1136px;top:246.5px;color:#000;max-width:64px;overflow:hidden">07 00</div>
<div class="t" style="left:1211px;top:246.5px;color:#000;max-width:64px;overflow:hidden">07 00</div>
<div class="t" style="left:1286px;top:246.5px;color:#000;max-width:64px;overflow:hidden">07 00</div>
<div class="t" style="left:1361px;top:246.5px;color:#000;max-width:64px;overflow:hidden">07 00</div>
<div class="t" style="left:1436px;top:246.5px;color:#000;max-width:64px;overflow:hidden">07 00</div>
<div class="t" style="left:1511px;top:246.5px;color:#000;max-width:64px;overflow:hidden">07 00</div>
<div class="t" style="left:1586px;top:246.5px;color:#000;max-width:64px;overflow:hidden">07 00</div>
<div class="t" style="left:1661px;top:246.5px;color:#000;max-width:64px;overflow:hidden">07 00</div>
<div class="t" style="left:1736px;top:246.5px;color:#000;max-width:64px;overflow:hidden">07 00</div>
<div class="t" style="left:1811px;top:246.5px;color:#000;max-width:64px;overflow:hidden">07 00</div>
<div class="t" style="left:1886px;top:246.5px;color:#000;max-width:26px;overflow:hidden">08 00</div>
<div class="a" style="left:990px;top:268px;width:10px;height:1px;background:repeating-linear-gradient(to right,#b4c4b4 0 1px,transparent 1px 3px)"></div>
<div class="t" style="left:1001px;top:261.5px;color:#9a9a9a">EDID - Editor ID</div>
<div class="a" style="left:990px;top:283px;width:10px;height:1px;background:repeating-linear-gradient(to right,#b4c4b4 0 1px,transparent 1px 3px)"></div>
<div class="t" style="left:1001px;top:276.5px;color:#9a9a9a">FULL - Name</div>
<div class="box" style="left:986px;top:295px;"></div>
<div class="a" style="left:994px;top:298px;width:6px;height:1px;background:repeating-linear-gradient(to right,#b4c4b4 0 1px,transparent 1px 3px)"></div>
<div class="t" style="left:1001px;top:291.5px;color:#800080">DATA - Flags (sorted)</div>
<div class="t" style="left:1136px;top:291.5px;color:#800080;max-width:64px;overflow:hidden">Has Water</div>
<div class="t" style="left:1211px;top:291.5px;color:#8a8a8a;max-width:64px;overflow:hidden">Has Water</div>
<div class="t" style="left:1286px;top:291.5px;color:#8a8a8a;max-width:64px;overflow:hidden">Has Water</div>
<div class="t" style="left:1361px;top:291.5px;color:#8a8a8a;max-width:64px;overflow:hidden">Has Water</div>
<div class="t" style="left:1436px;top:291.5px;color:#8a8a8a;max-width:64px;overflow:hidden">Has Water</div>
<div class="t" style="left:1511px;top:291.5px;color:#8a8a8a;max-width:64px;overflow:hidden">Has Water</div>
<div class="t" style="left:1586px;top:291.5px;color:#8a8a8a;max-width:64px;overflow:hidden">Has Water</div>
<div class="t" style="left:1661px;top:291.5px;color:#8a8a8a;max-width:64px;overflow:hidden">Has Water</div>
<div class="t" style="left:1736px;top:291.5px;color:#8a8a8a;max-width:64px;overflow:hidden">Has Water</div>
<div class="t" style="left:1811px;top:291.5px;color:#8a8a8a;max-width:64px;overflow:hidden">Has Water</div>
<div class="t" style="left:1886px;top:291.5px;color:#8a8a8a;max-width:26px;overflow:hidden">Has Water</div>
<div class="a" style="left:1005px;top:313px;width:10px;height:1px;background:repeating-linear-gradient(to right,#b4c4b4 0 1px,transparent 1px 3px)"></div>
<div class="t" style="left:1016px;top:306.5px;color:#800080">Has Water</div>
<div class="t" style="left:1136px;top:306.5px;color:#800080;max-width:64px;overflow:hidden">Has Water</div>
<div class="t" style="left:1211px;top:306.5px;color:#8a8a8a;max-width:64px;overflow:hidden">Has Water</div>
<div class="t" style="left:1286px;top:306.5px;color:#8a8a8a;max-width:64px;overflow:hidden">Has Water</div>
<div class="t" style="left:1361px;top:306.5px;color:#8a8a8a;max-width:64px;overflow:hidden">Has Water</div>
<div class="t" style="left:1436px;top:306.5px;color:#8a8a8a;max-width:64px;overflow:hidden">Has Water</div>
<div class="t" style="left:1511px;top:306.5px;color:#8a8a8a;max-width:64px;overflow:hidden">Has Water</div>
<div class="t" style="left:1586px;top:306.5px;color:#8a8a8a;max-width:64px;overflow:hidden">Has Water</div>
<div class="t" style="left:1661px;top:306.5px;color:#8a8a8a;max-width:64px;overflow:hidden">Has Water</div>
<div class="t" style="left:1736px;top:306.5px;color:#8a8a8a;max-width:64px;overflow:hidden">Has Water</div>
<div class="t" style="left:1811px;top:306.5px;color:#8a8a8a;max-width:64px;overflow:hidden">Has Water</div>
<div class="t" style="left:1886px;top:306.5px;color:#8a8a8a;max-width:26px;overflow:hidden">Has Water</div>
<div class="a" style="left:990px;top:328px;width:10px;height:1px;background:repeating-linear-gradient(to right,#b4c4b4 0 1px,transparent 1px 3px)"></div>
<div class="t" style="left:1001px;top:321.5px;color:#9a9a9a">VISI - PreVis Files Timestamp</div>
<div class="a" style="left:990px;top:343px;width:10px;height:1px;background:repeating-linear-gradient(to right,#b4c4b4 0 1px,transparent 1px 3px)"></div>
<div class="t" style="left:1001px;top:336.5px;color:#9a9a9a">RVIS - In PreVis File Of</div>
<div class="a" style="left:990px;top:358px;width:10px;height:1px;background:repeating-linear-gradient(to right,#b4c4b4 0 1px,transparent 1px 3px)"></div>
<div class="t" style="left:1001px;top:351.5px;color:#9a9a9a">PCMB - PreCombined Files T...</div>
<div class="box" style="left:986px;top:370px;"></div>
<div class="a" style="left:994px;top:373px;width:6px;height:1px;background:repeating-linear-gradient(to right,#b4c4b4 0 1px,transparent 1px 3px)"></div>
<div class="t" style="left:1001px;top:366.5px;color:#800080">XCLC - Grid</div>
<div class="a" style="left:1005px;top:388px;width:10px;height:1px;background:repeating-linear-gradient(to right,#b4c4b4 0 1px,transparent 1px 3px)"></div>
<div class="t" style="left:1016px;top:381.5px;color:#800080">X</div>
<div class="t" style="left:1136px;top:381.5px;color:#800080;max-width:64px;overflow:hidden">0</div>
<div class="t" style="left:1211px;top:381.5px;color:#8a8a8a;max-width:64px;overflow:hidden">0</div>
<div class="t" style="left:1286px;top:381.5px;color:#8a8a8a;max-width:64px;overflow:hidden">0</div>
<div class="t" style="left:1361px;top:381.5px;color:#8a8a8a;max-width:64px;overflow:hidden">0</div>
<div class="t" style="left:1436px;top:381.5px;color:#8a8a8a;max-width:64px;overflow:hidden">0</div>
<div class="t" style="left:1511px;top:381.5px;color:#8a8a8a;max-width:64px;overflow:hidden">0</div>
<div class="t" style="left:1586px;top:381.5px;color:#8a8a8a;max-width:64px;overflow:hidden">0</div>
<div class="t" style="left:1661px;top:381.5px;color:#8a8a8a;max-width:64px;overflow:hidden">0</div>
<div class="t" style="left:1736px;top:381.5px;color:#8a8a8a;max-width:64px;overflow:hidden">0</div>
<div class="t" style="left:1811px;top:381.5px;color:#8a8a8a;max-width:64px;overflow:hidden">0</div>
<div class="t" style="left:1886px;top:381.5px;color:#8a8a8a;max-width:26px;overflow:hidden">0</div>
<div class="a" style="left:1005px;top:403px;width:10px;height:1px;background:repeating-linear-gradient(to right,#b4c4b4 0 1px,transparent 1px 3px)"></div>
<div class="t" style="left:1016px;top:396.5px;color:#800080">Y</div>
<div class="t" style="left:1136px;top:396.5px;color:#800080;max-width:64px;overflow:hidden">0</div>
<div class="t" style="left:1211px;top:396.5px;color:#8a8a8a;max-width:64px;overflow:hidden">0</div>
<div class="t" style="left:1286px;top:396.5px;color:#8a8a8a;max-width:64px;overflow:hidden">0</div>
<div class="t" style="left:1361px;top:396.5px;color:#8a8a8a;max-width:64px;overflow:hidden">0</div>
<div class="t" style="left:1436px;top:396.5px;color:#8a8a8a;max-width:64px;overflow:hidden">0</div>
<div class="t" style="left:1511px;top:396.5px;color:#8a8a8a;max-width:64px;overflow:hidden">0</div>
<div class="t" style="left:1586px;top:396.5px;color:#8a8a8a;max-width:64px;overflow:hidden">0</div>
<div class="t" style="left:1661px;top:396.5px;color:#8a8a8a;max-width:64px;overflow:hidden">0</div>
<div class="t" style="left:1736px;top:396.5px;color:#8a8a8a;max-width:64px;overflow:hidden">0</div>
<div class="t" style="left:1811px;top:396.5px;color:#8a8a8a;max-width:64px;overflow:hidden">0</div>
<div class="t" style="left:1886px;top:396.5px;color:#8a8a8a;max-width:26px;overflow:hidden">0</div>
<div class="a" style="left:1005px;top:418px;width:10px;height:1px;background:repeating-linear-gradient(to right,#b4c4b4 0 1px,transparent 1px 3px)"></div>
<div class="t" style="left:1016px;top:411.5px;color:#800080">Land Flags</div>
<div class="a" style="left:990px;top:433px;width:10px;height:1px;background:repeating-linear-gradient(to right,#b4c4b4 0 1px,transparent 1px 3px)"></div>
<div class="t" style="left:1001px;top:426.5px;color:#9a9a9a">XCLL - Lighting</div>
<div class="a" style="left:990px;top:448px;width:10px;height:1px;background:repeating-linear-gradient(to right,#b4c4b4 0 1px,transparent 1px 3px)"></div>
<div class="t" style="left:1001px;top:441.5px;color:#9a9a9a">CNAM - Precombined Objec...</div>
<div class="a" style="left:990px;top:463px;width:10px;height:1px;background:repeating-linear-gradient(to right,#b4c4b4 0 1px,transparent 1px 3px)"></div>
<div class="t" style="left:1001px;top:456.5px;color:#9a9a9a">ZNAM - Precombined Objec...</div>
<div class="a" style="left:990px;top:478px;width:10px;height:1px;background:repeating-linear-gradient(to right,#b4c4b4 0 1px,transparent 1px 3px)"></div>
<div class="t" style="left:1001px;top:471.5px;color:#9a9a9a">TVDT - Unknown</div>
<div class="a" style="left:990px;top:493px;width:10px;height:1px;background:repeating-linear-gradient(to right,#b4c4b4 0 1px,transparent 1px 3px)"></div>
<div class="t" style="left:1001px;top:486.5px;color:#9a9a9a">MHDT - Max Height Data</div>
<div class="a" style="left:990px;top:508px;width:10px;height:1px;background:repeating-linear-gradient(to right,#b4c4b4 0 1px,transparent 1px 3px)"></div>
<div class="t" style="left:1001px;top:501.5px;color:#800080">LTMP - Lighting Template</div>
<div class="t" style="left:1136px;top:501.5px;color:#800080;max-width:64px;overflow:hidden">NULL - Null R...</div>
<div class="t" style="left:1211px;top:501.5px;color:#8a8a8a;max-width:64px;overflow:hidden">NULL - Null R...</div>
<div class="t" style="left:1286px;top:501.5px;color:#8a8a8a;max-width:64px;overflow:hidden">NULL - Null R...</div>
<div class="t" style="left:1361px;top:501.5px;color:#8a8a8a;max-width:64px;overflow:hidden">NULL - Null R...</div>
<div class="t" style="left:1436px;top:501.5px;color:#8a8a8a;max-width:64px;overflow:hidden">NULL - Null R...</div>
<div class="t" style="left:1511px;top:501.5px;color:#8a8a8a;max-width:64px;overflow:hidden">NULL - Null R...</div>
<div class="t" style="left:1586px;top:501.5px;color:#8a8a8a;max-width:64px;overflow:hidden">NULL - Null R...</div>
<div class="t" style="left:1661px;top:501.5px;color:#8a8a8a;max-width:64px;overflow:hidden">NULL - Null R...</div>
<div class="t" style="left:1736px;top:501.5px;color:#8a8a8a;max-width:64px;overflow:hidden">NULL - Null R...</div>
<div class="t" style="left:1811px;top:501.5px;color:#8a8a8a;max-width:64px;overflow:hidden">NULL - Null R...</div>
<div class="t" style="left:1886px;top:501.5px;color:#8a8a8a;max-width:26px;overflow:hidden">NULL - Null R...</div>
<div class="a" style="left:990px;top:523px;width:10px;height:1px;background:repeating-linear-gradient(to right,#b4c4b4 0 1px,transparent 1px 3px)"></div>
<div class="t" style="left:1001px;top:516.5px;color:#800080">XCLW - Water Height</div>
<div class="t" style="left:1136px;top:516.5px;color:#800080;max-width:64px;overflow:hidden">Default</div>
<div class="t" style="left:1211px;top:516.5px;color:#8a8a8a;max-width:64px;overflow:hidden">Default</div>
<div class="t" style="left:1286px;top:516.5px;color:#8a8a8a;max-width:64px;overflow:hidden">Default</div>
<div class="t" style="left:1361px;top:516.5px;color:#8a8a8a;max-width:64px;overflow:hidden">Default</div>
<div class="t" style="left:1436px;top:516.5px;color:#8a8a8a;max-width:64px;overflow:hidden">Default</div>
<div class="t" style="left:1511px;top:516.5px;color:#8a8a8a;max-width:64px;overflow:hidden">Default</div>
<div class="t" style="left:1586px;top:516.5px;color:#8a8a8a;max-width:64px;overflow:hidden">Default</div>
<div class="t" style="left:1661px;top:516.5px;color:#8a8a8a;max-width:64px;overflow:hidden">Default</div>
<div class="t" style="left:1736px;top:516.5px;color:#8a8a8a;max-width:64px;overflow:hidden">Default</div>
<div class="t" style="left:1811px;top:516.5px;color:#8a8a8a;max-width:64px;overflow:hidden">Default</div>
<div class="t" style="left:1886px;top:516.5px;color:#8a8a8a;max-width:26px;overflow:hidden">Default</div>
<div class="box" style="left:986px;top:535px;"></div>
<div class="a" style="left:994px;top:538px;width:6px;height:1px;background:repeating-linear-gradient(to right,#b4c4b4 0 1px,transparent 1px 3px)"></div>
<div class="t" style="left:1001px;top:531.5px;color:#800080">XCLR - Regions (sorted)</div>
<div class="a" style="left:1005px;top:553px;width:10px;height:1px;background:repeating-linear-gradient(to right,#b4c4b4 0 1px,transparent 1px 3px)"></div>
<div class="t" style="left:1016px;top:546.5px;color:#800080">Region</div>
<div class="t" style="left:1136px;top:546.5px;color:#800080;max-width:64px;overflow:hidden">Border [REGN...</div>
<div class="t" style="left:1211px;top:546.5px;color:#8a8a8a;max-width:64px;overflow:hidden">Border [REGN...</div>
<div class="t" style="left:1286px;top:546.5px;color:#8a8a8a;max-width:64px;overflow:hidden">Border [REGN...</div>
<div class="t" style="left:1361px;top:546.5px;color:#8a8a8a;max-width:64px;overflow:hidden">Border [REGN...</div>
<div class="t" style="left:1436px;top:546.5px;color:#8a8a8a;max-width:64px;overflow:hidden">Border [REGN...</div>
<div class="t" style="left:1511px;top:546.5px;color:#8a8a8a;max-width:64px;overflow:hidden">Border [REGN...</div>
<div class="t" style="left:1586px;top:546.5px;color:#8a8a8a;max-width:64px;overflow:hidden">Border [REGN...</div>
<div class="t" style="left:1661px;top:546.5px;color:#8a8a8a;max-width:64px;overflow:hidden">Border [REGN...</div>
<div class="t" style="left:1736px;top:546.5px;color:#8a8a8a;max-width:64px;overflow:hidden">Border [REGN...</div>
<div class="t" style="left:1811px;top:546.5px;color:#8a8a8a;max-width:64px;overflow:hidden">Border [REGN...</div>
<div class="t" style="left:1886px;top:546.5px;color:#8a8a8a;max-width:26px;overflow:hidden">Border [REGN...</div>
<div class="a" style="left:990px;top:568px;width:10px;height:1px;background:repeating-linear-gradient(to right,#b4c4b4 0 1px,transparent 1px 3px)"></div>
<div class="t" style="left:1001px;top:561.5px;color:#9a9a9a">XLCN - Location</div>
<div class="a" style="left:990px;top:583px;width:10px;height:1px;background:repeating-linear-gradient(to right,#b4c4b4 0 1px,transparent 1px 3px)"></div>
<div class="t" style="left:1001px;top:576.5px;color:#9a9a9a">XWCN - Unknown</div>
<div class="a" style="left:990px;top:598px;width:10px;height:1px;background:repeating-linear-gradient(to right,#b4c4b4 0 1px,transparent 1px 3px)"></div>
<div class="t" style="left:1001px;top:591.5px;color:#9a9a9a">XWCU - Water Velocity</div>
<div class="a" style="left:990px;top:613px;width:10px;height:1px;background:repeating-linear-gradient(to right,#b4c4b4 0 1px,transparent 1px 3px)"></div>
<div class="t" style="left:1001px;top:606.5px;color:#9a9a9a">XCWT - Water</div>
<div class="a" style="left:990px;top:628px;width:10px;height:1px;background:repeating-linear-gradient(to right,#b4c4b4 0 1px,transparent 1px 3px)"></div>
<div class="t" style="left:1001px;top:621.5px;color:#9a9a9a">XOWN - Owner</div>
<div class="a" style="left:990px;top:643px;width:10px;height:1px;background:repeating-linear-gradient(to right,#b4c4b4 0 1px,transparent 1px 3px)"></div>
<div class="t" style="left:1001px;top:636.5px;color:#9a9a9a">XRNK - Owner Faction Rank</div>
<div class="a" style="left:990px;top:658px;width:10px;height:1px;background:repeating-linear-gradient(to right,#b4c4b4 0 1px,transparent 1px 3px)"></div>
<div class="t" style="left:1001px;top:651.5px;color:#9a9a9a">XILL - Lock List</div>
<div class="a" style="left:990px;top:673px;width:10px;height:1px;background:repeating-linear-gradient(to right,#b4c4b4 0 1px,transparent 1px 3px)"></div>
<div class="t" style="left:1001px;top:666.5px;color:#9a9a9a">XILW - Exterior LOD</div>
<div class="a" style="left:990px;top:688px;width:10px;height:1px;background:repeating-linear-gradient(to right,#b4c4b4 0 1px,transparent 1px 3px)"></div>
<div class="t" style="left:1001px;top:681.5px;color:#9a9a9a">XWEM - Water Environment ...</div>
<div class="a" style="left:990px;top:703px;width:10px;height:1px;background:repeating-linear-gradient(to right,#b4c4b4 0 1px,transparent 1px 3px)"></div>
<div class="t" style="left:1001px;top:696.5px;color:#9a9a9a">XCCM - Sky/Weather from R...</div>
<div class="a" style="left:990px;top:718px;width:10px;height:1px;background:repeating-linear-gradient(to right,#b4c4b4 0 1px,transparent 1px 3px)"></div>
<div class="t" style="left:1001px;top:711.5px;color:#9a9a9a">XCAS - Acoustic Space</div>
<div class="a" style="left:990px;top:733px;width:10px;height:1px;background:repeating-linear-gradient(to right,#b4c4b4 0 1px,transparent 1px 3px)"></div>
<div class="t" style="left:1001px;top:726.5px;color:#9a9a9a">XEZN - Encounter Zone</div>
<div class="a" style="left:990px;top:748px;width:10px;height:1px;background:repeating-linear-gradient(to right,#b4c4b4 0 1px,transparent 1px 3px)"></div>
<div class="t" style="left:1001px;top:741.5px;color:#9a9a9a">XCMO - Music Type</div>
<div class="a" style="left:990px;top:763px;width:10px;height:1px;background:repeating-linear-gradient(to right,#b4c4b4 0 1px,transparent 1px 3px)"></div>
<div class="t" style="left:1001px;top:756.5px;color:#9a9a9a">XCIM - Image Space</div>
<div class="a" style="left:990px;top:778px;width:10px;height:1px;background:repeating-linear-gradient(to right,#b4c4b4 0 1px,transparent 1px 3px)"></div>
<div class="t" style="left:1001px;top:771.5px;color:#9a9a9a">XGDR - God Rays</div>
<div class="a" style="left:990px;top:793px;width:10px;height:1px;background:repeating-linear-gradient(to right,#b4c4b4 0 1px,transparent 1px 3px)"></div>
<div class="t" style="left:1001px;top:786.5px;color:#9a9a9a">XPRI - Physics References</div>
<div class="a" style="left:990px;top:808px;width:10px;height:1px;background:repeating-linear-gradient(to right,#b4c4b4 0 1px,transparent 1px 3px)"></div>
<div class="t" style="left:1001px;top:801.5px;color:#9a9a9a">XCRI - Combined References</div>
<div class="a" style="left:978px;top:994px;width:935px;height:12px;background:#f0f0f0"></div>
<svg class="a" style="left:980px;top:996px" width="8" height="8"><path d="M5.5 1L2 4L5.5 7" stroke="#505050" stroke-width="1.5" fill="none"/></svg>
<div class="a" style="left:990px;top:995px;width:257px;height:10px;background:#cdcdcd"></div>
<svg class="a" style="left:1902px;top:996px" width="8" height="8"><path d="M2 1L5.5 4L2 7" stroke="#505050" stroke-width="1.5" fill="none"/></svg>
<div class="a" style="left:974px;top:1009px;width:942px;height:18px;background:#f0f0f0;border-top:1px solid #e4e4e4"></div>
<div class="a" style="left:974px;top:1009px;width:38px;height:18px;background:#fff"></div>
<div class="t" style="left:979px;top:1012px;">View</div>
<div class="a" style="left:1013px;top:1010px;width:44px;height:16px;background:#ececec;border-right:1px solid #dadada"></div>
<div class="t" style="left:1015px;top:1011px;">Messages</div>
<div class="a" style="left:1058px;top:1010px;width:55px;height:16px;background:#ececec;border-right:1px solid #dadada"></div>
<div class="t" style="left:1062px;top:1011px;">Information</div>
<div class="a" style="left:1114px;top:1010px;width:54px;height:16px;background:#ececec;border-right:1px solid #dadada"></div>
<div class="t" style="left:1119px;top:1011px;">What's New</div>
<div class="a" style="left:0;top:1050px;width:1920px;height:30px;background:#0c1c2b"></div>
<div class="a" style="left:112px;top:1050px;width:36px;height:30px;background:#0f4a80"></div>
<div class="a" style="left:41px;top:1078px;width:30px;height:2px;background:#99c8f0"></div>
<div class="a" style="left:78px;top:1078px;width:29px;height:2px;background:#99c8f0"></div>
<div class="a" style="left:112px;top:1078px;width:36px;height:2px;background:#99c8f0"></div>
<div class="a" style="left:151px;top:1078px;width:30px;height:2px;background:#99c8f0"></div>
<svg class="a" style="left:12px;top:1058px" width="13" height="13"><path d="M0 1.8L5.5 1V6.2H0Z M6.5 0.9L13 0V6.2H6.5Z M0 7H5.5V12.2L0 11.4Z M6.5 7H13V13L6.5 12.1Z" fill="#fff"/></svg>
<svg class="a" style="left:47px;top:1055px" width="19" height="20"><defs><radialGradient id="ffg" cx="0.6" cy="0.3" r="0.8"><stop offset="0" stop-color="#ffe040"/><stop offset="0.5" stop-color="#ff8a20"/><stop offset="1" stop-color="#f0306a"/></radialGradient></defs><path d="M9.5 1.5 Q11 3 12.5 4 Q17.5 6 17.5 11 A8.3 8.3 0 1 1 1.5 9 Q2 6.5 3.5 5.5 Q4 7.5 5 8 Q6 4.5 9.5 1.5Z" fill="url(#ffg)"/><circle cx="9.5" cy="11.5" r="3.6" fill="#7b3ae0"/><path d="M4 8.5 Q6 7.5 8.5 8.5 Q6.5 10 6 11 Z" fill="#ffa530"/></svg>
<svg class="a" style="left:85px;top:1058px" width="17" height="15"><path d="M0 0.5H6L7 1.8H16.5V14H0Z" fill="#e0a820"/><rect x="0" y="2.5" width="16.5" height="11.5" fill="#fdd668"/><path d="M3.5 7.5H13V14H10.5V10H6V14H3.5Z" fill="#3a9ae8"/></svg>
<svg class="a" style="left:120px;top:1055px" width="19" height="20"><defs><clipPath id="ci2"><circle cx="9.5" cy="10" r="7.8"/></clipPath></defs><circle cx="9.5" cy="10" r="8.4" fill="#b4bab8" stroke="#2a2a2a" stroke-width="0.9"/><g clip-path="url(#ci2)"><rect x="4.5" y="5" width="3" height="5" fill="#e02828"/><rect x="4.5" y="10.5" width="3" height="5" fill="#d02020"/><rect x="8" y="2.5" width="3" height="14" fill="#e8d090"/><rect x="8.5" y="8" width="2" height="8" fill="#d8b840"/><rect x="11.5" y="5" width="3" height="4" fill="#d83030"/><rect x="11" y="9.5" width="3.5" height="5.5" fill="#3a60b0"/><rect x="14" y="7" width="2" height="3" fill="#b01818"/></g></svg>
<svg class="a" style="left:157px;top:1055px" width="19" height="20"><path d="M2 10 Q2 5 9 5 Q16 5 16 10 Q16 14 11 14 Q9 14 8 16 Q7 18 5 17 Q1 15 2 10Z" fill="#d8ecf8" stroke="#8ab0c8" stroke-width="0.5"/><circle cx="5" cy="11" r="1.2" fill="#e84040"/><circle cx="7.5" cy="8" r="1.2" fill="#40b840"/><circle cx="10.5" cy="7.5" r="1.2" fill="#f0b030"/><circle cx="8.5" cy="12" r="1" fill="#203040"/><path d="M9 18 L16.5 3" stroke="#e08828" stroke-width="1.6"/><path d="M15.5 3.5 L17.5 1" stroke="#c8a070" stroke-width="2.2"/></svg>
<svg class="a" style="left:1755px;top:1061px" width="11" height="7"><path d="M1 6L5.5 1.5L10 6" stroke="#fff" stroke-width="1.1" fill="none"/></svg>
<svg class="a" style="left:1771px;top:1059px" width="14" height="12"><rect x="3.5" y="1.5" width="9" height="6" stroke="#fff" fill="none"/><path d="M8 8V10M5 10.5H11" stroke="#fff"/><rect x="0.5" y="0.5" width="3" height="4" stroke="#fff" fill="none"/></svg>
<svg class="a" style="left:1789px;top:1059px" width="14" height="12"><path d="M1 4H3L6 1V11L3 8H1Z" stroke="#fff" fill="none"/><path d="M8 4Q9 6 8 8M10 2.5Q12 6 10 9.5M12 1Q14.5 6 12 11" stroke="#ccc" fill="none"/></svg>
<div class="t" style="left:1810px;top:1058px;color:#fff;font-size:9px;-webkit-text-stroke:0">ENG</div>
<div class="t" style="left:1840px;top:1051px;color:#fff;font-size:9px;-webkit-text-stroke:0">3:18 AM</div>
<div class="t" style="left:1839px;top:1064px;color:#fff;font-size:9px;-webkit-text-stroke:0">2/5/2025</div>
<svg class="a" style="left:1888px;top:1058px" width="22" height="20"><path d="M1 1H13V10H6L3 13V10H1Z" fill="#fff"/><path d="M3 3.5H11M3 5.5H11M3 7.5H9" stroke="#888" stroke-width="0.8"/><circle cx="13" cy="13" r="5.5" fill="#1a5a9a"/><text x="13" y="16" font-size="8" fill="#fff" text-anchor="middle" font-family="Liberation Sans">1</text></svg>
<div class="a" style="left:1916px;top:1050px;width:1px;height:30px;background:#6a7a88"></div>
</body></html>
